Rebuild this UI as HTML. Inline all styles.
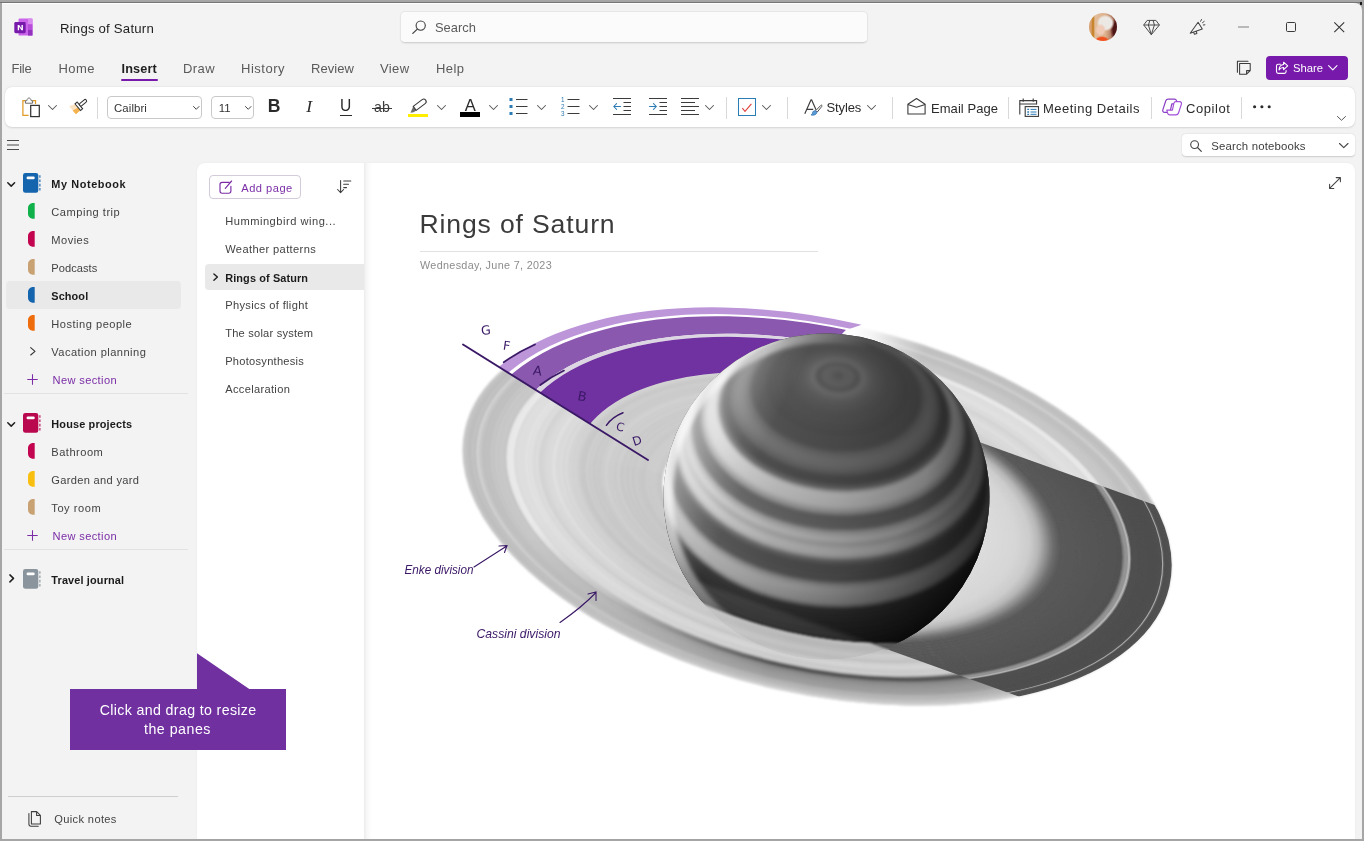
<!DOCTYPE html><html lang="en"><head><meta charset="utf-8"><title>Rings of Saturn - OneNote</title><style>

*{box-sizing:border-box;margin:0;padding:0}
html,body{width:1364px;height:841px;overflow:hidden;background:#a6a6a6;font-family:"Liberation Sans",sans-serif}
#win{position:absolute;left:2px;top:3px;width:1360px;height:836px;background:#f3f3f3;border-top-right-radius:7px;overflow:hidden}
#root{position:absolute;left:0;top:0;width:1364px;height:841px;overflow:hidden;will-change:transform}
.t{position:absolute;white-space:nowrap;line-height:24px;letter-spacing:0}
.i{position:absolute;overflow:visible}
.b{position:absolute}


#topline{left:0;top:2px;width:1362px;height:1px;background:#757575}
#tophl{left:2px;top:3px;width:1352px;height:1px;background:#fff}
#sbox{left:400px;top:11px;width:468px;height:32px;background:#fbfbfb;border:1px solid #e6e6e6;border-bottom-color:#d2d2d2;border-radius:5px;box-shadow:0 1px 1.5px rgba(0,0,0,.06)}
#tabline{left:121px;top:78.5px;width:37px;height:2.6px;background:#7719aa;border-radius:1.3px}
#share{left:1266px;top:56px;width:82px;height:23.5px;background:#7719aa;border-radius:4px}
#avatar{left:1089px;top:13px;width:28px;height:28px;border-radius:50%;overflow:hidden;
 background:
  radial-gradient(ellipse 5.5px 6.5px at 11.5px 17px,#efcbb8 0 60%,rgba(239,203,184,0) 100%),
  radial-gradient(ellipse 9px 8.5px at 16.5px 10px,#ece8e4 0 70%,rgba(236,232,228,0) 100%),
  radial-gradient(ellipse 7.5px 4.5px at 13px 27.5px,#f0521f 0 65%,rgba(240,82,31,0) 100%),
  radial-gradient(ellipse 7px 13px at 28px 17px,#4f1616 0 55%,rgba(79,22,22,0) 100%),
  linear-gradient(90deg,#d9a070 0,#d9a070 8%,#c8862f 11%,#c8862f 17%,#e3bd9a 21%,#dcb08c 60%,#8a4a3a 100%)}


#tb{left:5px;top:87px;width:1350px;height:40px;background:#fff;border-radius:7px;box-shadow:0 0.5px 2px rgba(0,0,0,.13),0 0 1px rgba(0,0,0,.08)}
.sep{position:absolute;top:96.5px;width:1px;height:22px;background:#d9d9d9}
.box{position:absolute;top:95.5px;height:23.3px;border:1px solid #c9c9c9;border-radius:4px;background:#fff}
#snb{left:1182px;top:134.4px;width:173px;height:21.6px;background:#fff;border-radius:4px;box-shadow:0 0.5px 1.5px rgba(0,0,0,.16),0 0 1px rgba(0,0,0,.08)}


.hl{position:absolute;background:#e9e9e9}
.hr{position:absolute;height:1px;background:#e2e2e2}
#pane{left:197px;top:163px;width:1158px;height:676px;background:#fff;border-top-left-radius:8px;border-top-right-radius:8px;box-shadow:0 0 2px rgba(0,0,0,.07)}
#pshadow{left:364px;top:163px;width:8px;height:676px;background:linear-gradient(90deg,rgba(0,0,0,.075),rgba(0,0,0,.03) 35%,rgba(0,0,0,0))}
#addpg{left:209px;top:175.3px;width:91.7px;height:23.3px;border:1px solid #d3cbd9;border-radius:4px;background:#fff}


#tline{left:420px;top:250.5px;width:398px;height:1px;background:#e1e1e1}
#co{left:69.8px;top:689px;width:216.4px;height:61.4px;background:#7030a0}

</style></head><body><div id="win"></div><div id="root">
<div class="b" id="topline"></div><div class="b" id="tophl"></div>
<div class="b" style="left:1359.5px;top:2px;width:2.5px;height:2.5px;background:#1a1a1a"></div>
<svg class="i" style="left:14px;top:18px" width="19" height="18" viewBox="0 0 19 18" ><defs><linearGradient id="lgA" x1="0" y1="0" x2="1" y2="1"><stop offset="0" stop-color="#c35fe0"/><stop offset="1" stop-color="#9a36c2"/></linearGradient></defs><rect x="4.5" y="0.6" width="14" height="17" rx="1.2" fill="#ca64ea"/><rect x="14" y="0.6" width="4.5" height="5.7" fill="#d98bf0"/><rect x="14" y="6.3" width="4.5" height="5.6" fill="#b84ddb"/><rect x="14" y="11.9" width="4.5" height="5.7" fill="#9332bf"/><rect x="0.3" y="4" width="11.4" height="11.2" rx="1.4" fill="#7719aa"/><path d="M3.7 12.3V6.9h1.5l2.3 3.5V6.9h1.4v5.4H7.5L5.1 8.7v3.6z" fill="#fff"/></svg>
<span class="t" style="left:60.0px;top:16.5px;font-size:13.20px;font-weight:400;color:#1f1f1f;letter-spacing:0.201px;">Rings of Saturn</span>
<div class="b" id="sbox"></div>
<svg class="i" style="left:412px;top:20px" width="14" height="14" viewBox="0 0 14 14" ><circle cx="8.7" cy="5.6" r="4.6" fill="none" stroke="#444" stroke-width="1.15"/><path d="M5.3 9.1L0.8 13.4" stroke="#444" stroke-width="1.3" stroke-linecap="round"/></svg>
<span class="t" style="left:435.0px;top:15.5px;font-size:12.90px;font-weight:400;color:#5c5c5c;letter-spacing:0.021px;">Search</span>
<div class="b" id="avatar"></div>
<svg class="i" style="left:1142.5px;top:19px" width="17" height="16" viewBox="0 0 17 16" ><path d="M4.2 1.4H12.9L16.4 6L8.3 15.7L0.7 6Z M0.7 6H16.4 M5.4 6L8.3 15.7L11.400 6 M5.400 6L6.900 1.400 M11.400 6L10.100 1.400" fill="none" stroke="#4a4a4a" stroke-width="1" stroke-linejoin="round"/></svg>
<svg class="i" style="left:1188.5px;top:19px" width="17" height="17" viewBox="0 0 17 17" ><path d="M1.2 14.2L9.1 3.2l4.2 6.9z M4.6 13.4l0.9 1.9 2.4-0.9-0.6-1.7" fill="none" stroke="#444" stroke-width="1.05" stroke-linejoin="round"/><path d="M11.6 2.3l0.9-1.8M13.5 3.7l1.7-1.3M14.3 6l1.6-0.2" stroke="#444" stroke-width="1" stroke-linecap="round"/></svg>
<div class="b" style="left:1238px;top:26.4px;width:10.5px;height:1.2px;background:#b9b9b9"></div>
<div class="b" style="left:1285.7px;top:21.8px;width:10.2px;height:10.2px;border:1.1px solid #3a3a3a;border-radius:1.6px"></div>
<svg class="i" style="left:1334px;top:22px" width="10.5" height="10.5" viewBox="0 0 10.5 10.5" ><path d="M0.3 0.3l9.9 9.9M10.2 0.3l-9.9 9.9" stroke="#333" stroke-width="1.05"/></svg>
<span class="t" style="left:11.5px;top:56.5px;font-size:13.00px;font-weight:400;color:#5a5a5a;letter-spacing:-0.237px;">File</span>
<span class="t" style="left:58.5px;top:56.5px;font-size:13.00px;font-weight:400;color:#5a5a5a;letter-spacing:0.456px;">Home</span>
<span class="t" style="left:121.5px;top:57.0px;font-size:12.70px;font-weight:700;color:#1f1f1f;letter-spacing:0.153px;">Insert</span>
<span class="t" style="left:183.0px;top:56.5px;font-size:13.00px;font-weight:400;color:#5a5a5a;letter-spacing:0.416px;">Draw</span>
<span class="t" style="left:241.0px;top:56.5px;font-size:13.00px;font-weight:400;color:#5a5a5a;letter-spacing:0.508px;">History</span>
<span class="t" style="left:311.0px;top:56.5px;font-size:13.00px;font-weight:400;color:#5a5a5a;letter-spacing:0.063px;">Review</span>
<span class="t" style="left:380.0px;top:56.5px;font-size:13.00px;font-weight:400;color:#5a5a5a;letter-spacing:0.389px;">View</span>
<span class="t" style="left:436.0px;top:56.5px;font-size:13.00px;font-weight:400;color:#5a5a5a;letter-spacing:0.441px;">Help</span>
<div class="b" id="tabline"></div>
<svg class="i" style="left:1236px;top:59.5px" width="16" height="16" viewBox="0 0 16 16" ><path d="M3.6 3.4h10.6v7.2l-3.6 3.6H3.6z M14.2 10.6h-3.6v3.6" fill="none" stroke="#3a3a3a" stroke-width="1.05" stroke-linejoin="round"/><path d="M1.4 1.4v10.8 M1.4 1.2h10.6" fill="none" stroke="#3a3a3a" stroke-width="1.05" stroke-linecap="round"/></svg>
<div class="b" id="share"></div>
<svg class="i" style="left:1275px;top:61px" width="14" height="14" viewBox="0 0 14 14" ><path d="M5.4 3.2H3.3a1.8 1.8 0 0 0-1.8 1.8v5.6a1.8 1.8 0 0 0 1.8 1.8h6a1.8 1.8 0 0 0 1.8-1.8v-1" fill="none" stroke="#fff" stroke-width="1.1" stroke-linecap="round"/><path d="M8.6 1.2l4.1 3.7-4.1 3.7V6.5C6.3 6.4 5 7.2 4 8.9 4.2 5.6 5.8 3.7 8.6 3.5z" fill="none" stroke="#fff" stroke-width="1.1" stroke-linejoin="round"/></svg>
<span class="t" style="left:1293.0px;top:56.0px;font-size:11.24px;font-weight:400;color:#fff;">Share</span>
<svg class="i" style="left:1327.5px;top:65px" width="10" height="6" viewBox="0 0 10 6" ><path d="M0.6 0.7l4.2 4.2 4.2-4.2" fill="none" stroke="#fff" stroke-width="1.1" stroke-linecap="round" stroke-linejoin="round"/></svg>
<div class="b" id="tb"></div>
<svg class="i" style="left:22px;top:97.9px" width="18" height="19" viewBox="0 0 18 19" ><path d="M3.600 2.700H0.900V17.300H6.600 M10.400 2.700h3.100v3.300" fill="none" stroke="#e09a26" stroke-width="1.250"/><path d="M3.400 5.200V2.700h1.400c0.300-1.700 1.200-2.700 2.200-2.700s1.900 1 2.200 2.700h1.400v2.500z" fill="#fff" stroke="#6a6a6a" stroke-width="1"/><rect x="8.700" y="7.400" width="8.600" height="11.200" fill="#fff" stroke="#333" stroke-width="1.250"/></svg>
<svg class="i" style="left:47.9px;top:105.2px" width="9" height="5" viewBox="0 0 9 5" ><path d="M0.5 0.5L4.5 4.5L8.5 0.5" fill="none" stroke="#555" stroke-width="1.05" stroke-linecap="round" stroke-linejoin="round"/></svg>
<svg class="i" style="left:69px;top:99px" width="18" height="16" viewBox="0 0 18 16" ><g transform="translate(9.800 7.300) rotate(-40)"><path d="M-1.200 -4L-7.400 -6.200L-7.300 4.200L-1.200 4z" fill="#fbe3c2"/><path d="M-1.200 0.600L-7.350 -0.800L-7.300 4.200L-1.200 4z" fill="#f4b350"/><rect x="-1.300" y="-4.300" width="2.700" height="8.600" fill="#fff" stroke="#333" stroke-width="1.050"/><rect x="1.400" y="-1.500" width="8.300" height="3" rx="1.400" fill="#fff" stroke="#333" stroke-width="1.050"/></g></svg>
<div class="sep" style="left:97.2px"></div>
<div class="box" style="left:106.5px;width:95.7px"></div>
<span class="t" style="left:114.0px;top:96.0px;font-size:11.40px;font-weight:400;color:#333;letter-spacing:0.099px;">Cailbri</span>
<svg class="i" style="left:193px;top:105.6px" width="6.5" height="3.8" viewBox="0 0 6.5 3.8" ><path d="M0.5 0.5L3.25 3.3L6.0 0.5" fill="none" stroke="#444" stroke-width="1" stroke-linecap="round" stroke-linejoin="round"/></svg>
<div class="box" style="left:210.7px;width:43.5px"></div>
<span class="t" style="left:218.8px;top:96.0px;font-size:11.40px;font-weight:400;color:#333;letter-spacing:0.083px;">11</span>
<svg class="i" style="left:244.5px;top:105.6px" width="6.5" height="3.8" viewBox="0 0 6.5 3.8" ><path d="M0.5 0.5L3.25 3.3L6.0 0.5" fill="none" stroke="#444" stroke-width="1" stroke-linecap="round" stroke-linejoin="round"/></svg>
<span class="t" style="left:267.8px;top:94.0px;font-size:17.60px;font-weight:700;color:#2b2b2b;">B</span>
<span class="t" style="left:306.3px;top:94.0px;font-size:17.50px;font-weight:400;color:#2b2b2b;font-family:&quot;Liberation Serif&quot;,serif;font-style:italic;">I</span>
<span class="t" style="left:340.0px;top:93.5px;font-size:15.60px;font-weight:400;color:#2b2b2b;">U</span>
<div class="b" style="left:340px;top:114.9px;width:12px;height:1.1px;background:#2b2b2b"></div>
<span class="t" style="left:374.0px;top:95.0px;font-size:14.20px;font-weight:400;color:#3b3b3b;">ab</span>
<div class="b" style="left:372px;top:107.7px;width:19.8px;height:1.1px;background:#3b3b3b"></div>
<svg class="i" style="left:408px;top:97px" width="22" height="18" viewBox="0 0 22 18" ><g transform="translate(6.700 11.400) rotate(-37)"><path d="M0 -2.500L-6 0.900L-3.200 2.500L0 2.500z" fill="#6e6e6e"/><path d="M0 -2.500H11.200a2.500 2.500 0 0 1 0 5H0z" fill="#fff" stroke="#3a3a3a" stroke-width="1.100" stroke-linejoin="round"/></g></svg>
<div class="b" style="left:408px;top:114px;width:20px;height:3.4px;background:#ffee00"></div>
<svg class="i" style="left:437px;top:105.2px" width="9" height="5" viewBox="0 0 9 5" ><path d="M0.5 0.5L4.5 4.5L8.5 0.5" fill="none" stroke="#555" stroke-width="1.05" stroke-linecap="round" stroke-linejoin="round"/></svg>
<span class="t" style="left:464.7px;top:93.5px;font-size:16.60px;font-weight:400;color:#2b2b2b;">A</span>
<div class="b" style="left:460px;top:112px;width:20px;height:5px;background:#000"></div>
<svg class="i" style="left:488.8px;top:105.2px" width="9" height="5" viewBox="0 0 9 5" ><path d="M0.5 0.5L4.5 4.5L8.5 0.5" fill="none" stroke="#555" stroke-width="1.05" stroke-linecap="round" stroke-linejoin="round"/></svg>
<svg class="i" style="left:508.5px;top:98px" width="19" height="17" viewBox="0 0 19 17" ><rect x="0.5" y="0.0" width="3" height="3" fill="#2b7bb5"/><path d="M7 1.5H18.5" stroke="#3b3b3b" stroke-width="1"/><rect x="0.5" y="7.0" width="3" height="3" fill="#2b7bb5"/><path d="M7 8.5H18.5" stroke="#3b3b3b" stroke-width="1"/><rect x="0.5" y="14.0" width="3" height="3" fill="#2b7bb5"/><path d="M7 15.5H18.5" stroke="#3b3b3b" stroke-width="1"/></svg>
<svg class="i" style="left:537px;top:105.2px" width="9" height="5" viewBox="0 0 9 5" ><path d="M0.5 0.5L4.5 4.5L8.5 0.5" fill="none" stroke="#555" stroke-width="1.05" stroke-linecap="round" stroke-linejoin="round"/></svg>
<svg class="i" style="left:560.5px;top:98px" width="19" height="17" viewBox="0 0 19 17" ><text x="0" y="3.7" font-family="Liberation Sans, sans-serif" font-size="6.3" fill="#2b7bb5">1</text><path d="M6.5 1.5H18.5" stroke="#3b3b3b" stroke-width="1"/><text x="0" y="10.7" font-family="Liberation Sans, sans-serif" font-size="6.3" fill="#2b7bb5">2</text><path d="M6.5 8.5H18.5" stroke="#3b3b3b" stroke-width="1"/><text x="0" y="17.7" font-family="Liberation Sans, sans-serif" font-size="6.3" fill="#2b7bb5">3</text><path d="M6.5 15.5H18.5" stroke="#3b3b3b" stroke-width="1"/></svg>
<svg class="i" style="left:589.3px;top:105.2px" width="9" height="5" viewBox="0 0 9 5" ><path d="M0.5 0.5L4.5 4.5L8.5 0.5" fill="none" stroke="#555" stroke-width="1.05" stroke-linecap="round" stroke-linejoin="round"/></svg>
<svg class="i" style="left:613px;top:98px" width="18" height="17" viewBox="0 0 18 17" ><path d="M0 0.5H18" stroke="#3b3b3b" stroke-width="1"/><path d="M10.5 4.5H18" stroke="#3b3b3b" stroke-width="1"/><path d="M10.5 8.5H18" stroke="#3b3b3b" stroke-width="1"/><path d="M10.5 12.5H18" stroke="#3b3b3b" stroke-width="1"/><path d="M0 16.5H18" stroke="#3b3b3b" stroke-width="1"/><path d="M7.6 8.5H0.8M3.6 5.6l-2.900 2.900 2.900 2.900" fill="none" stroke="#2b7bb5" stroke-width="1.05" stroke-linecap="round" stroke-linejoin="round"/></svg>
<svg class="i" style="left:649px;top:98px" width="18" height="17" viewBox="0 0 18 17" ><path d="M0 0.5H18" stroke="#3b3b3b" stroke-width="1"/><path d="M10.5 4.5H18" stroke="#3b3b3b" stroke-width="1"/><path d="M10.5 8.5H18" stroke="#3b3b3b" stroke-width="1"/><path d="M10.5 12.5H18" stroke="#3b3b3b" stroke-width="1"/><path d="M0 16.5H18" stroke="#3b3b3b" stroke-width="1"/><path d="M0.5 8.5H7.3M4.500 5.600l2.900 2.900-2.900 2.900" fill="none" stroke="#2b7bb5" stroke-width="1.05" stroke-linecap="round" stroke-linejoin="round"/></svg>
<svg class="i" style="left:681px;top:98px" width="18" height="17" viewBox="0 0 18 17" ><path d="M0 0.5H18" stroke="#3b3b3b" stroke-width="1"/><path d="M0 4.5H14" stroke="#3b3b3b" stroke-width="1"/><path d="M0 8.5H18" stroke="#3b3b3b" stroke-width="1"/><path d="M0 12.5H14" stroke="#3b3b3b" stroke-width="1"/><path d="M0 16.5H18" stroke="#3b3b3b" stroke-width="1"/></svg>
<svg class="i" style="left:705px;top:105.2px" width="9" height="5" viewBox="0 0 9 5" ><path d="M0.5 0.5L4.5 4.5L8.5 0.5" fill="none" stroke="#555" stroke-width="1.05" stroke-linecap="round" stroke-linejoin="round"/></svg>
<div class="sep" style="left:726.3px"></div>
<div class="b" style="left:737.8px;top:98px;width:18px;height:18.2px;border:1.2px solid #2b7bb5;background:#fff"></div>
<svg class="i" style="left:741px;top:101.5px" width="12" height="11" viewBox="0 0 12 11" ><path d="M1.300 6.200l2.700 3.100 6.400-7.500" fill="none" stroke="#e0443e" stroke-width="1.150"/></svg>
<svg class="i" style="left:762px;top:105.2px" width="9" height="5" viewBox="0 0 9 5" ><path d="M0.5 0.5L4.5 4.5L8.5 0.5" fill="none" stroke="#555" stroke-width="1.05" stroke-linecap="round" stroke-linejoin="round"/></svg>
<div class="sep" style="left:787.1px"></div>
<svg class="i" style="left:804.4px;top:98.5px" width="18" height="18" viewBox="0 0 18 18" ><path d="M0.800 14.800L6.900 0.900h0.800l4.300 9.800 M2.800 10.300h6.400" fill="none" stroke="#3b3b3b" stroke-width="1.150" stroke-linejoin="round"/><path d="M16.900 6.300l-5.100 5.200 1.500 1.500 4.600-5.700c.500-.800-.400-1.600-1-1z" fill="#fff" stroke="#3b3b3b" stroke-width=".9"/><path d="M11.500 11.700c-1.700-.300-2.800.700-3 2.100-.100 1-.500 1.600-1.500 2.100 2.700.900 5.700-.300 6-2.700z" fill="#5b9bd5" stroke="#2f6fb0" stroke-width=".7"/></svg>
<span class="t" style="left:826.6px;top:95.5px;font-size:13.00px;font-weight:400;color:#2b2b2b;letter-spacing:-0.150px;">Styles</span>
<svg class="i" style="left:867px;top:105.2px" width="9" height="5" viewBox="0 0 9 5" ><path d="M0.5 0.5L4.5 4.5L8.5 0.5" fill="none" stroke="#555" stroke-width="1.05" stroke-linecap="round" stroke-linejoin="round"/></svg>
<div class="sep" style="left:892.3px"></div>
<svg class="i" style="left:907.2px;top:98.2px" width="19" height="17.5" viewBox="0 0 19 17.5" ><path d="M0.900 6.300L9.500 0.500l8.600 5.800v9.700H0.900z" fill="#fff" stroke="#3b3b3b" stroke-width="1.100" stroke-linejoin="round"/><path d="M0.900 6.500l8.600 2.800 8.600-2.800" fill="none" stroke="#3b3b3b" stroke-width="1.100" stroke-linejoin="round"/></svg>
<span class="t" style="left:931.0px;top:96.5px;font-size:13.00px;font-weight:400;color:#2b2b2b;letter-spacing:0.052px;">Email Page</span>
<div class="sep" style="left:1008px"></div>
<svg class="i" style="left:1019.3px;top:98px" width="20.5" height="19.5" viewBox="0 0 20.5 19.5" ><path d="M0.800 16.600V2.600h16.800v3.800" fill="none" stroke="#3b3b3b" stroke-width="1.100"/><path d="M0.800 6H17.600" stroke="#3b3b3b" stroke-width="1"/><path d="M4.200 0.600v3.200M14.200 0.600v3.200" stroke="#3b3b3b" stroke-width="1.100"/><rect x="6.200" y="8.600" width="13.300" height="9.800" fill="#fff" stroke="#3b3b3b" stroke-width="1.100"/><path d="M8.300 11.400h1.800M8.300 14h1.800M8.300 16.300h1.800" stroke="#2b7bb5" stroke-width="1.300"/><path d="M11.500 11.400h6M11.500 14h6M11.500 16.300h6" stroke="#2b7bb5" stroke-width="1"/></svg>
<span class="t" style="left:1043.0px;top:96.5px;font-size:13.00px;font-weight:400;color:#2b2b2b;letter-spacing:0.493px;">Meeting Details</span>
<div class="sep" style="left:1151px"></div>
<svg class="i" style="left:1161.5px;top:98.2px" width="20.5" height="18" viewBox="0 0 20.5 18" ><path d="M7.200 1.200h5.300c1 0 1.700.500 2 1.500l.900 3.100h-5.600L8.300 12.900c-.300 1-1 1.500-2 1.500H2.600c-1.400 0-2.200-1.200-1.800-2.500L3.700 3c.400-1.200 1.300-1.800 2.500-1.800z" fill="#fff" stroke="#8a3fc4" stroke-width="1.200" stroke-linejoin="round"/><path d="M13 16.800H7.700c-1 0-1.700-.500-2-1.500l-.900-3.100h5.600l1.500-7.100c.300-1 1-1.500 2-1.500h3.700c1.400 0 2.200 1.200 1.800 2.500L16.500 15c-.400 1.200-1.300 1.800-2.500 1.800z" fill="#fff" stroke="#a34fd8" stroke-width="1.200" stroke-linejoin="round"/></svg>
<span class="t" style="left:1186.0px;top:96.5px;font-size:13.00px;font-weight:400;color:#2b2b2b;letter-spacing:0.576px;">Copilot</span>
<div class="sep" style="left:1241px"></div>
<svg class="i" style="left:1253px;top:105px" width="19" height="4" viewBox="0 0 19 4" ><circle cx="1.600" cy="1.700" r="1.550" fill="#2b2b2b"/><circle cx="8.900" cy="1.700" r="1.550" fill="#2b2b2b"/><circle cx="16.200" cy="1.700" r="1.550" fill="#2b2b2b"/></svg>
<svg class="i" style="left:1336.5px;top:115.5px" width="9" height="4.8" viewBox="0 0 9 4.8" ><path d="M0.5 0.5L4.5 4.3L8.5 0.5" fill="none" stroke="#555" stroke-width="1" stroke-linecap="round" stroke-linejoin="round"/></svg>
<svg class="i" style="left:7px;top:140px" width="12" height="11" viewBox="0 0 12 11" ><path d="M0 0.500H12M0 5H12M0 9.500H12" stroke="#4a4a4a" stroke-width="1.050"/></svg>
<div class="b" id="snb"></div>
<svg class="i" style="left:1189.5px;top:139.5px" width="12" height="12" viewBox="0 0 12 12" ><circle cx="4.600" cy="4.600" r="3.900" fill="none" stroke="#444" stroke-width="1.100"/><path d="M7.500 7.500L11.300 11.300" stroke="#444" stroke-width="1.200" stroke-linecap="round"/></svg>
<span class="t" style="left:1211.3px;top:134.0px;font-size:11.40px;font-weight:400;color:#3d3d3d;letter-spacing:0.163px;">Search notebooks</span>
<svg class="i" style="left:1339px;top:142.6px" width="9.5" height="5.2" viewBox="0 0 9.5 5.2" ><path d="M0.5 0.5L4.75 4.7L9.0 0.5" fill="none" stroke="#444" stroke-width="1.1" stroke-linecap="round" stroke-linejoin="round"/></svg>
<div class="hl" style="left:5.8px;top:281px;width:175px;height:28px;border-radius:4px"></div>
<svg class="i" style="left:23px;top:173.0px" width="18" height="20" viewBox="0 0 18 20" ><rect x="0" y="0" width="15.3" height="19.8" rx="2.3" fill="#1464ae"/><rect x="3.6" y="3.500" width="8.100" height="2.700" rx="1.200" fill="#fff"/><path d="M16.900 2.200V17.600" stroke="#1464ae" stroke-width="1.100" stroke-dasharray="2.6 1.7"/></svg>
<span class="t" style="left:51.3px;top:172.0px;font-size:10.90px;font-weight:700;color:#1b1b1b;letter-spacing:0.597px;">My Notebook</span>
<svg class="i" style="left:7px;top:181.5px" width="8.4" height="5" viewBox="0 0 8.4 5" ><path d="M0.800 0.800L4.200 4.100L7.600 0.800" fill="none" stroke="#1f1f1f" stroke-width="1.500" stroke-linecap="round" stroke-linejoin="round"/></svg>
<svg class="i" style="left:27.5px;top:202.8px" width="7" height="16" viewBox="0 0 7 16" ><path d="M6.700 0V15.800H5.200C2.200 15.800 0 13.600 0 10.800V5C0 2.200 2.200 0 5.200 0z" fill="#10b14b"/></svg>
<span class="t" style="left:51.3px;top:200.0px;font-size:11.10px;font-weight:400;color:#424242;letter-spacing:0.506px;">Camping trip</span>
<svg class="i" style="left:27.5px;top:230.8px" width="7" height="16" viewBox="0 0 7 16" ><path d="M6.700 0V15.800H5.200C2.200 15.800 0 13.600 0 10.800V5C0 2.200 2.200 0 5.200 0z" fill="#c3044f"/></svg>
<span class="t" style="left:51.3px;top:228.0px;font-size:11.10px;font-weight:400;color:#424242;letter-spacing:0.473px;">Movies</span>
<svg class="i" style="left:27.5px;top:258.8px" width="7" height="16" viewBox="0 0 7 16" ><path d="M6.700 0V15.800H5.200C2.200 15.800 0 13.600 0 10.800V5C0 2.200 2.200 0 5.200 0z" fill="#c9a273"/></svg>
<span class="t" style="left:51.3px;top:256.0px;font-size:11.10px;font-weight:400;color:#424242;letter-spacing:0.043px;">Podcasts</span>
<svg class="i" style="left:27.5px;top:286.8px" width="7" height="16" viewBox="0 0 7 16" ><path d="M6.700 0V15.800H5.200C2.200 15.800 0 13.600 0 10.800V5C0 2.200 2.200 0 5.200 0z" fill="#1464ae"/></svg>
<span class="t" style="left:51.3px;top:284.0px;font-size:10.90px;font-weight:700;color:#1b1b1b;letter-spacing:0.111px;">School</span>
<svg class="i" style="left:27.5px;top:314.8px" width="7" height="16" viewBox="0 0 7 16" ><path d="M6.700 0V15.800H5.200C2.200 15.800 0 13.600 0 10.800V5C0 2.200 2.200 0 5.200 0z" fill="#ef6c0c"/></svg>
<span class="t" style="left:51.3px;top:312.0px;font-size:11.10px;font-weight:400;color:#424242;letter-spacing:0.496px;">Hosting people</span>
<svg class="i" style="left:30.2px;top:347.4px" width="6" height="8.6" viewBox="0 0 6 8.6" ><path d="M0.700 0.600L5 4.300L0.700 8" fill="none" stroke="#333" stroke-width="1.100" stroke-linecap="round" stroke-linejoin="round"/></svg>
<span class="t" style="left:51.3px;top:340.0px;font-size:11.10px;font-weight:400;color:#424242;letter-spacing:0.445px;">Vacation planning</span>
<svg class="i" style="left:27px;top:373.8px" width="11" height="11" viewBox="0 0 11 11" ><path d="M5.500 0.300V10.700M0.300 5.500H10.700" stroke="#7a2da6" stroke-width="1.050"/></svg>
<span class="t" style="left:52.5px;top:368.0px;font-size:11.10px;font-weight:400;color:#7a2da6;letter-spacing:0.367px;">New section</span>
<svg class="i" style="left:23px;top:413.1px" width="18" height="20" viewBox="0 0 18 20" ><rect x="0" y="0" width="15.3" height="19.8" rx="2.3" fill="#b9084e"/><rect x="3.6" y="3.500" width="8.100" height="2.700" rx="1.200" fill="#fff"/><path d="M16.900 2.200V17.600" stroke="#b9084e" stroke-width="1.100" stroke-dasharray="2.6 1.7"/></svg>
<span class="t" style="left:51.3px;top:412.0px;font-size:10.90px;font-weight:700;color:#1b1b1b;letter-spacing:0.161px;">House projects</span>
<svg class="i" style="left:7px;top:421.6px" width="8.4" height="5" viewBox="0 0 8.4 5" ><path d="M0.800 0.800L4.200 4.100L7.600 0.800" fill="none" stroke="#1f1f1f" stroke-width="1.500" stroke-linecap="round" stroke-linejoin="round"/></svg>
<svg class="i" style="left:27.5px;top:442.90000000000003px" width="7" height="16" viewBox="0 0 7 16" ><path d="M6.700 0V15.800H5.200C2.200 15.800 0 13.600 0 10.800V5C0 2.200 2.200 0 5.200 0z" fill="#c3044f"/></svg>
<span class="t" style="left:51.3px;top:440.0px;font-size:11.10px;font-weight:400;color:#424242;letter-spacing:0.485px;">Bathroom</span>
<svg class="i" style="left:27.5px;top:470.90000000000003px" width="7" height="16" viewBox="0 0 7 16" ><path d="M6.700 0V15.800H5.200C2.200 15.800 0 13.600 0 10.800V5C0 2.200 2.200 0 5.200 0z" fill="#f9bf10"/></svg>
<span class="t" style="left:51.3px;top:468.0px;font-size:11.10px;font-weight:400;color:#424242;letter-spacing:0.313px;">Garden and yard</span>
<svg class="i" style="left:27.5px;top:498.90000000000003px" width="7" height="16" viewBox="0 0 7 16" ><path d="M6.700 0V15.800H5.200C2.200 15.800 0 13.600 0 10.800V5C0 2.200 2.200 0 5.200 0z" fill="#c9a273"/></svg>
<span class="t" style="left:51.3px;top:496.0px;font-size:11.10px;font-weight:400;color:#424242;letter-spacing:0.544px;">Toy room</span>
<svg class="i" style="left:27px;top:529.9px" width="11" height="11" viewBox="0 0 11 11" ><path d="M5.500 0.300V10.700M0.300 5.500H10.700" stroke="#7a2da6" stroke-width="1.050"/></svg>
<span class="t" style="left:52.5px;top:524.0px;font-size:11.10px;font-weight:400;color:#7a2da6;letter-spacing:0.367px;">New section</span>
<svg class="i" style="left:23px;top:569.1px" width="18" height="20" viewBox="0 0 18 20" ><rect x="0" y="0" width="15.3" height="19.8" rx="2.3" fill="#8a949c"/><rect x="3.6" y="3.500" width="8.100" height="2.700" rx="1.200" fill="#fff"/><path d="M16.900 2.200V17.600" stroke="#8a949c" stroke-width="1.100" stroke-dasharray="2.6 1.7"/></svg>
<span class="t" style="left:51.3px;top:568.0px;font-size:10.90px;font-weight:700;color:#1b1b1b;letter-spacing:0.152px;">Travel journal</span>
<svg class="i" style="left:8.6px;top:574.4px" width="5.5" height="8.8" viewBox="0 0 5.5 8.8" ><path d="M0.900 0.900L4.500 4.400L0.900 7.900" fill="none" stroke="#1f1f1f" stroke-width="1.500" stroke-linecap="round" stroke-linejoin="round"/></svg>
<div class="hr" style="left:4px;top:393.2px;width:184px"></div>
<div class="hr" style="left:4px;top:548.8px;width:184px"></div>
<div class="hr" style="left:8px;top:796px;width:170px;background:#cfcfcf"></div>
<svg class="i" style="left:28px;top:811.2px" width="13" height="16" viewBox="0 0 13 16" ><path d="M3.400 0.600h5.200l3.800 3.800v8.500H3.400z M8.600 0.600v3.800h3.800" fill="none" stroke="#3d3d3d" stroke-width="1.050" stroke-linejoin="round"/><path d="M0.900 2.500v10.600c0 1.300.800 2.100 2.100 2.100h7.300" fill="none" stroke="#3d3d3d" stroke-width="1.050" stroke-linecap="round"/></svg>
<span class="t" style="left:54.3px;top:807.0px;font-size:11.10px;font-weight:400;color:#424242;letter-spacing:0.354px;">Quick notes</span>
<div class="b" id="pane"></div><div class="b" id="pshadow"></div>
<div class="b" id="addpg"></div>
<svg class="i" style="left:218.8px;top:180px" width="14" height="14" viewBox="0 0 14 14" ><path d="M10.300 2.300H3.100C1.900 2.300 1 3.200 1 4.400v6.700c0 1.200.900 2.100 2.100 2.100h6.700c1.200 0 2.100-.900 2.100-2.100V6.200" fill="none" stroke="#7a2da6" stroke-width="1.150" stroke-linecap="round"/><path d="M6.300 8.300L12.600 1" stroke="#7a2da6" stroke-width="1.150" stroke-linecap="round"/></svg>
<span class="t" style="left:241.3px;top:176.0px;font-size:11.10px;font-weight:400;color:#7a2da6;letter-spacing:0.497px;">Add page</span>
<svg class="i" style="left:337px;top:180.3px" width="14.5" height="13.5" viewBox="0 0 14.5 13.5" ><path d="M3.600 0.600V12.600M0.600 9.500l3 3.200 3-3.200" fill="none" stroke="#3d3d3d" stroke-width="1.050" stroke-linecap="round" stroke-linejoin="round"/><path d="M6.700 1H13.800M6.700 4.300H11.500M6.700 7.600H9.500" stroke="#3d3d3d" stroke-width="1.050" stroke-linecap="round"/></svg>
<div class="hl" style="left:205.2px;top:264.2px;width:158.8px;height:26.300px;border-radius:4px 0 0 4px"></div>
<span class="t" style="left:225.2px;top:209.0px;font-size:11.10px;font-weight:400;color:#424242;letter-spacing:0.517px;">Hummingbird wing...</span>
<span class="t" style="left:225.2px;top:237.0px;font-size:11.10px;font-weight:400;color:#424242;letter-spacing:0.379px;">Weather patterns</span>
<span class="t" style="left:225.2px;top:266.0px;font-size:10.90px;font-weight:700;color:#1b1b1b;letter-spacing:0.124px;">Rings of Saturn</span>
<span class="t" style="left:225.2px;top:293.0px;font-size:11.10px;font-weight:400;color:#424242;letter-spacing:0.346px;">Physics of flight</span>
<span class="t" style="left:225.2px;top:321.0px;font-size:11.10px;font-weight:400;color:#424242;letter-spacing:0.218px;">The solar system</span>
<span class="t" style="left:225.2px;top:349.0px;font-size:11.10px;font-weight:400;color:#424242;letter-spacing:0.266px;">Photosynthesis</span>
<span class="t" style="left:225.2px;top:377.0px;font-size:11.10px;font-weight:400;color:#424242;letter-spacing:0.326px;">Accelaration</span>
<svg class="i" style="left:212.8px;top:273px" width="5.5" height="8.2" viewBox="0 0 5.5 8.2" ><path d="M0.900 0.900L4.400 4.100L0.900 7.300" fill="none" stroke="#1f1f1f" stroke-width="1.400" stroke-linecap="round" stroke-linejoin="round"/></svg>
<span class="t" style="left:419.5px;top:212.0px;font-size:26.60px;font-weight:400;color:#3b3b3b;letter-spacing:0.844px;">Rings of Saturn</span>
<div class="b" id="tline"></div>
<span class="t" style="left:420.0px;top:253.0px;font-size:10.80px;font-weight:400;color:#8c8c8c;letter-spacing:0.327px;">Wednesday, June 7, 2023</span>
<svg class="i" style="left:1329px;top:177px" width="12" height="12" viewBox="0 0 12 12" ><path d="M7.200 0.600H11.400V4.800M11.400 0.600L0.600 11.400M0.600 7.200V11.400H4.800" fill="none" stroke="#444" stroke-width="1.050" stroke-linecap="round" stroke-linejoin="round"/></svg>
<svg class="i" style="left:0;top:0" width="1364" height="841" viewBox="0 0 1364 841">
<defs>
<filter id="sb1" x="-5%" y="-5%" width="110%" height="110%"><feGaussianBlur stdDeviation="1.3"/></filter>
<filter id="sb2" x="-5%" y="-5%" width="110%" height="110%"><feGaussianBlur stdDeviation="2.2"/></filter>
<filter id="sb3" x="-5%" y="-5%" width="110%" height="110%"><feGaussianBlur stdDeviation="0.6"/></filter>
<clipPath id="cpPlanet"><ellipse cx="826.5" cy="496.4" rx="163.0" ry="163.0" transform="rotate(5.5 826.5 496.4)"/></clipPath>
<clipPath id="cpPlanetBig"><circle cx="826.5" cy="496.4" r="165.5"/></clipPath>
<clipPath id="cpFront"><polygon points="133.9,355.3 1500.1,660.7 1347.4,1343.8 -18.8,1038.4"/></clipPath>
<clipPath id="cpStrip"><polygon points="811.0,381.6 1300.0,557.1 1300.0,797.6 811.0,622.0"/></clipPath>
<clipPath id="cpBelowStrip"><polygon points="600,546.3 1017,696 1300,797.6 1300,900 600,900"/></clipPath>
<clipPath id="cpNotPlanet"><path clip-rule="evenodd" d="M0 0H1364V841H0Z M987.8 511.9L985.8 525.9L982.6 539.7L978.2 553.1L972.7 566.1L966.1 578.6L958.4 590.5L949.7 601.6L940.0 611.9L929.5 621.4L918.3 629.9L906.3 637.4L893.7 643.8L880.6 649.1L867.1 653.2L853.2 656.2L839.2 657.9L825.1 658.4L811.0 657.7L797.0 655.7L783.2 652.5L769.8 648.1L756.8 642.6L744.3 636.0L732.4 628.3L721.3 619.6L711.0 609.9L701.5 599.4L693.0 588.2L685.5 576.2L679.1 563.6L673.8 550.5L669.7 537.0L666.7 523.1L665.0 509.1L664.5 495.0L665.2 480.9L667.2 466.9L670.4 453.1L674.8 439.7L680.3 426.7L686.9 414.2L694.6 402.3L703.3 391.2L713.0 380.9L723.5 371.4L734.7 362.9L746.7 355.4L759.3 349.0L772.4 343.7L785.9 339.6L799.8 336.6L813.8 334.9L827.9 334.4L842.0 335.1L856.0 337.1L869.8 340.3L883.2 344.7L896.2 350.2L908.7 356.8L920.6 364.5L931.7 373.2L942.0 382.9L951.5 393.4L960.0 404.6L967.5 416.6L973.9 429.2L979.2 442.3L983.3 455.8L986.3 469.7L988.0 483.7L988.5 497.8Z"/></clipPath>
<clipPath id="cpPurple"><polygon points="463,344.5 648,460 700,492.5 760,420 845.5,330.2 861,325 900,290 440,290"/></clipPath>
<linearGradient id="gLight" gradientUnits="userSpaceOnUse" x1="662" y1="478" x2="990" y2="515"><stop offset="0" stop-color="#000" stop-opacity=".04"/><stop offset=".15" stop-color="#000" stop-opacity=".08"/><stop offset=".35" stop-color="#000" stop-opacity=".22"/><stop offset=".55" stop-color="#000" stop-opacity=".31"/><stop offset=".8" stop-color="#000" stop-opacity=".46"/><stop offset="1" stop-color="#000" stop-opacity=".62"/></linearGradient>
<radialGradient id="gLimb" gradientUnits="userSpaceOnUse" cx="790" cy="446" r="240" ><stop offset="0" stop-color="#000" stop-opacity="0"/><stop offset=".58" stop-color="#000" stop-opacity="0"/><stop offset=".82" stop-color="#000" stop-opacity=".30"/><stop offset="1" stop-color="#000" stop-opacity=".6"/></radialGradient>
<linearGradient id="gLeft" gradientUnits="userSpaceOnUse" x1="664" y1="455" x2="742" y2="492"><stop offset="0" stop-color="#fff" stop-opacity=".5"/><stop offset=".35" stop-color="#fff" stop-opacity=".3"/><stop offset=".75" stop-color="#fff" stop-opacity=".08"/><stop offset="1" stop-color="#fff" stop-opacity="0"/></linearGradient>
<radialGradient id="gRim" gradientUnits="userSpaceOnUse" cx="672" cy="455" r="215"><stop offset="0" stop-color="#fff" stop-opacity=".72"/><stop offset=".45" stop-color="#fff" stop-opacity=".6"/><stop offset=".8" stop-color="#fff" stop-opacity=".28"/><stop offset="1" stop-color="#fff" stop-opacity="0"/></radialGradient>
<linearGradient id="gTipFade" gradientUnits="userSpaceOnUse" x1="856" y1="322" x2="925" y2="348"><stop offset="0" stop-color="#fff" stop-opacity="1"/><stop offset=".25" stop-color="#fff" stop-opacity=".85"/><stop offset=".65" stop-color="#fff" stop-opacity=".35"/><stop offset="1" stop-color="#fff" stop-opacity="0"/></linearGradient>
<linearGradient id="gFrontMask" gradientUnits="userSpaceOnUse" x1="560" y1="500" x2="770" y2="665"><stop offset="0" stop-color="#fff" stop-opacity="0"/><stop offset=".35" stop-color="#fff" stop-opacity=".25"/><stop offset="1" stop-color="#fff" stop-opacity="1"/></linearGradient>
<mask id="mFront" maskUnits="userSpaceOnUse" x="380" y="280" width="900" height="480"><rect x="380" y="280" width="900" height="480" fill="url(#gFrontMask)"/></mask>
<linearGradient id="gRingShade" gradientUnits="userSpaceOnUse" x1="700" y1="380" x2="860" y2="720"><stop offset="0" stop-color="#000" stop-opacity="0"/><stop offset=".45" stop-color="#000" stop-opacity="0"/><stop offset=".8" stop-color="#000" stop-opacity=".16"/><stop offset="1" stop-color="#000" stop-opacity=".42"/></linearGradient>
</defs>
<g filter="url(#sb1)"><g transform="translate(817.0 508.0) rotate(12.6) scale(361.0 186.0)" fill="none"><circle r="0.9960" stroke="#cbcbcb" stroke-width="0.0080"/><circle r="0.9920" stroke="#c6c6c6" stroke-width="0.0080"/><circle r="0.9880" stroke="#c1c1c1" stroke-width="0.0080"/><circle r="0.9840" stroke="#c2c2c2" stroke-width="0.0080"/><circle r="0.9800" stroke="#bcbcbc" stroke-width="0.0080"/><circle r="0.9760" stroke="#bfbfbf" stroke-width="0.0080"/><circle r="0.9720" stroke="#bfbfbf" stroke-width="0.0080"/><circle r="0.9680" stroke="#c6c6c6" stroke-width="0.0080"/><circle r="0.9640" stroke="#bdbdbd" stroke-width="0.0080"/><circle r="0.9600" stroke="#c0c0c0" stroke-width="0.0080"/><circle r="0.9560" stroke="#d6d6d6" stroke-width="0.0080"/><circle r="0.9520" stroke="#cecece" stroke-width="0.0080"/><circle r="0.9480" stroke="#c5c5c5" stroke-width="0.0080"/><circle r="0.9440" stroke="#c6c6c6" stroke-width="0.0080"/><circle r="0.9400" stroke="#bebebe" stroke-width="0.0080"/><circle r="0.9360" stroke="#bebebe" stroke-width="0.0080"/><circle r="0.9320" stroke="#c2c2c2" stroke-width="0.0080"/><circle r="0.9280" stroke="#c1c1c1" stroke-width="0.0080"/><circle r="0.9240" stroke="#bebebe" stroke-width="0.0080"/><circle r="0.9200" stroke="#c2c2c2" stroke-width="0.0080"/><circle r="0.9160" stroke="#c7c7c7" stroke-width="0.0080"/><circle r="0.9120" stroke="#c4c4c4" stroke-width="0.0080"/><circle r="0.9080" stroke="#c2c2c2" stroke-width="0.0080"/><circle r="0.9040" stroke="#cccccc" stroke-width="0.0080"/><circle r="0.9000" stroke="#c6c6c6" stroke-width="0.0080"/><circle r="0.8960" stroke="#c5c5c5" stroke-width="0.0080"/><circle r="0.8920" stroke="#c9c9c9" stroke-width="0.0080"/><circle r="0.8880" stroke="#c8c8c8" stroke-width="0.0080"/><circle r="0.8840" stroke="#cbcbcb" stroke-width="0.0080"/><circle r="0.8800" stroke="#c3c3c3" stroke-width="0.0080"/><circle r="0.8760" stroke="#c5c5c5" stroke-width="0.0080"/><circle r="0.8720" stroke="#e3e3e3" stroke-width="0.0080"/><circle r="0.8680" stroke="#eaeaea" stroke-width="0.0080"/><circle r="0.8640" stroke="#e7e7e7" stroke-width="0.0080"/><circle r="0.8600" stroke="#e9e9e9" stroke-width="0.0080"/><circle r="0.8560" stroke="#ececec" stroke-width="0.0080"/><circle r="0.8520" stroke="#dedede" stroke-width="0.0080"/><circle r="0.8480" stroke="#d9d9d9" stroke-width="0.0080"/><circle r="0.8440" stroke="#e0e0e0" stroke-width="0.0080"/><circle r="0.8400" stroke="#dcdcdc" stroke-width="0.0080"/><circle r="0.8360" stroke="#e0e0e0" stroke-width="0.0080"/><circle r="0.8320" stroke="#dedede" stroke-width="0.0080"/><circle r="0.8280" stroke="#dedede" stroke-width="0.0080"/><circle r="0.8240" stroke="#dfdfdf" stroke-width="0.0080"/><circle r="0.8200" stroke="#e0e0e0" stroke-width="0.0080"/><circle r="0.8160" stroke="#e5e5e5" stroke-width="0.0080"/><circle r="0.8120" stroke="#dcdcdc" stroke-width="0.0080"/><circle r="0.8080" stroke="#e3e3e3" stroke-width="0.0080"/><circle r="0.8040" stroke="#e1e1e1" stroke-width="0.0080"/><circle r="0.8000" stroke="#dcdcdc" stroke-width="0.0080"/><circle r="0.7960" stroke="#dadada" stroke-width="0.0080"/><circle r="0.7920" stroke="#dadada" stroke-width="0.0080"/><circle r="0.7880" stroke="#dedede" stroke-width="0.0080"/><circle r="0.7840" stroke="#dcdcdc" stroke-width="0.0080"/><circle r="0.7800" stroke="#d2d2d2" stroke-width="0.0080"/><circle r="0.7760" stroke="#d3d3d3" stroke-width="0.0080"/><circle r="0.7720" stroke="#d6d6d6" stroke-width="0.0080"/><circle r="0.7680" stroke="#d4d4d4" stroke-width="0.0080"/><circle r="0.7640" stroke="#dddddd" stroke-width="0.0080"/><circle r="0.7600" stroke="#d5d5d5" stroke-width="0.0080"/><circle r="0.7560" stroke="#dedede" stroke-width="0.0080"/><circle r="0.7520" stroke="#d9d9d9" stroke-width="0.0080"/><circle r="0.7480" stroke="#dadada" stroke-width="0.0080"/><circle r="0.7440" stroke="#e0e0e0" stroke-width="0.0080"/><circle r="0.7400" stroke="#e2e2e2" stroke-width="0.0080"/><circle r="0.7360" stroke="#dedede" stroke-width="0.0080"/><circle r="0.7320" stroke="#dadada" stroke-width="0.0080"/><circle r="0.7280" stroke="#dadada" stroke-width="0.0080"/><circle r="0.7240" stroke="#d9d9d9" stroke-width="0.0080"/><circle r="0.7200" stroke="#dedede" stroke-width="0.0080"/><circle r="0.7160" stroke="#d8d8d8" stroke-width="0.0080"/><circle r="0.7120" stroke="#d8d8d8" stroke-width="0.0080"/><circle r="0.7080" stroke="#d9d9d9" stroke-width="0.0080"/><circle r="0.7040" stroke="#dbdbdb" stroke-width="0.0080"/><circle r="0.7000" stroke="#d8d8d8" stroke-width="0.0080"/><circle r="0.6960" stroke="#d1d1d1" stroke-width="0.0080"/><circle r="0.6920" stroke="#d7d7d7" stroke-width="0.0080"/><circle r="0.6880" stroke="#d0d0d0" stroke-width="0.0080"/><circle r="0.6840" stroke="#d4d4d4" stroke-width="0.0080"/><circle r="0.6800" stroke="#d4d4d4" stroke-width="0.0080"/><circle r="0.6760" stroke="#d1d1d1" stroke-width="0.0080"/><circle r="0.6720" stroke="#d0d0d0" stroke-width="0.0080"/><circle r="0.6680" stroke="#cdcdcd" stroke-width="0.0080"/><circle r="0.6640" stroke="#c9c9c9" stroke-width="0.0080"/><circle r="0.6600" stroke="#c9c9c9" stroke-width="0.0080"/><circle r="0.6560" stroke="#c9c9c9" stroke-width="0.0080"/><circle r="0.6520" stroke="#c8c8c8" stroke-width="0.0080"/><circle r="0.6480" stroke="#cfcfcf" stroke-width="0.0080"/><circle r="0.6440" stroke="#d0d0d0" stroke-width="0.0080"/><circle r="0.6400" stroke="#c8c8c8" stroke-width="0.0080"/><circle r="0.6360" stroke="#d0d0d0" stroke-width="0.0080"/><circle r="0.6320" stroke="#cccccc" stroke-width="0.0080"/><circle r="0.6280" stroke="#cacaca" stroke-width="0.0080"/><circle r="0.6240" stroke="#c8c8c8" stroke-width="0.0080"/><circle r="0.6200" stroke="#d0d0d0" stroke-width="0.0080"/><circle r="0.6160" stroke="#c9c9c9" stroke-width="0.0080"/><circle r="0.6120" stroke="#cacaca" stroke-width="0.0080"/><circle r="0.6080" stroke="#cdcdcd" stroke-width="0.0080"/><circle r="0.6040" stroke="#cecece" stroke-width="0.0080"/><circle r="0.6000" stroke="#cdcdcd" stroke-width="0.0080"/><circle r="0.5960" stroke="#d2d2d2" stroke-width="0.0080"/><circle r="0.5920" stroke="#d2d2d2" stroke-width="0.0080"/><circle r="0.5880" stroke="#d1d1d1" stroke-width="0.0080"/><circle r="0.5840" stroke="#cccccc" stroke-width="0.0080"/><circle r="0.5800" stroke="#d0d0d0" stroke-width="0.0080"/><circle r="0.5760" stroke="#cecece" stroke-width="0.0080"/><circle r="0.5720" stroke="#cecece" stroke-width="0.0080"/><circle r="0.5680" stroke="#cdcdcd" stroke-width="0.0080"/><circle r="0.5640" stroke="#cbcbcb" stroke-width="0.0080"/><circle r="0.5600" stroke="#d1d1d1" stroke-width="0.0080"/><circle r="0.5560" stroke="#d0d0d0" stroke-width="0.0080"/><circle r="0.5520" stroke="#cacaca" stroke-width="0.0080"/><circle r="0.5480" stroke="#cacaca" stroke-width="0.0080"/><circle r="0.5440" stroke="#cacaca" stroke-width="0.0080"/><circle r="0.5400" stroke="#cfcfcf" stroke-width="0.0080"/><circle r="0.5360" stroke="#c9c9c9" stroke-width="0.0080"/><circle r="0.5320" stroke="#cbcbcb" stroke-width="0.0080"/><circle r="0.5280" stroke="#c9c9c9" stroke-width="0.0080"/><circle r="0.5240" stroke="#d1d1d1" stroke-width="0.0080"/><circle r="0.5200" stroke="#c8c8c8" stroke-width="0.0080"/><circle r="0.5160" stroke="#c9c9c9" stroke-width="0.0080"/><circle r="0.5120" stroke="#cdcdcd" stroke-width="0.0080"/><circle r="0.5080" stroke="#cecece" stroke-width="0.0080"/><circle r="0.5040" stroke="#cacaca" stroke-width="0.0080"/><circle r="0.5000" stroke="#cdcdcd" stroke-width="0.0080"/><circle r="0.4960" stroke="#c9c9c9" stroke-width="0.0080"/><circle r="0.4920" stroke="#cacaca" stroke-width="0.0080"/><circle r="0.4880" stroke="#c8c8c8" stroke-width="0.0080"/><circle r="0.4840" stroke="#cbcbcb" stroke-width="0.0080"/><circle r="0.4800" stroke="#cccccc" stroke-width="0.0080"/><circle r="0.4760" stroke="#cfcfcf" stroke-width="0.0080"/><circle r="0.4720" stroke="#cbcbcb" stroke-width="0.0080"/><circle r="0.4680" stroke="#cecece" stroke-width="0.0080"/><circle r="0.4640" stroke="#cdcdcd" stroke-width="0.0080"/><circle r="0.4600" stroke="#cecece" stroke-width="0.0080"/><circle r="0.4560" stroke="#cecece" stroke-width="0.0080"/><circle r="0.4520" stroke="#cdcdcd" stroke-width="0.0080"/><circle r="0.4480" stroke="#cacaca" stroke-width="0.0080"/><circle r="0.4440" stroke="#cccccc" stroke-width="0.0080"/><circle r="0.4400" stroke="#c8c8c8" stroke-width="0.0080"/></g><g clip-path="url(#cpFront)"><g mask="url(#mFront)"><g transform="translate(817.0 508.0) rotate(12.6) scale(361.0 186.0)" fill="none"><circle r="0.9960" stroke="#dddddd" stroke-width="0.0080"/><circle r="0.9920" stroke="#d4d4d4" stroke-width="0.0080"/><circle r="0.9880" stroke="#cccccc" stroke-width="0.0080"/><circle r="0.9840" stroke="#cdcdcd" stroke-width="0.0080"/><circle r="0.9800" stroke="#c2c2c2" stroke-width="0.0080"/><circle r="0.9760" stroke="#c1c1c1" stroke-width="0.0080"/><circle r="0.9720" stroke="#bdbdbd" stroke-width="0.0080"/><circle r="0.9680" stroke="#c2c2c2" stroke-width="0.0080"/><circle r="0.9640" stroke="#b3b3b3" stroke-width="0.0080"/><circle r="0.9600" stroke="#b2b2b2" stroke-width="0.0080"/><circle r="0.9560" stroke="#b8b8b8" stroke-width="0.0080"/><circle r="0.9520" stroke="#b3b3b3" stroke-width="0.0080"/><circle r="0.9480" stroke="#aeaeae" stroke-width="0.0080"/><circle r="0.9440" stroke="#adadad" stroke-width="0.0080"/><circle r="0.9400" stroke="#a1a1a1" stroke-width="0.0080"/><circle r="0.9360" stroke="#9e9e9e" stroke-width="0.0080"/><circle r="0.9320" stroke="#a2a2a2" stroke-width="0.0080"/><circle r="0.9280" stroke="#9e9e9e" stroke-width="0.0080"/><circle r="0.9240" stroke="#989898" stroke-width="0.0080"/><circle r="0.9200" stroke="#9b9b9b" stroke-width="0.0080"/><circle r="0.9160" stroke="#9d9d9d" stroke-width="0.0080"/><circle r="0.9120" stroke="#979797" stroke-width="0.0080"/><circle r="0.9080" stroke="#919191" stroke-width="0.0080"/><circle r="0.9040" stroke="#9c9c9c" stroke-width="0.0080"/><circle r="0.9000" stroke="#909090" stroke-width="0.0080"/><circle r="0.8960" stroke="#8c8c8c" stroke-width="0.0080"/><circle r="0.8920" stroke="#8f8f8f" stroke-width="0.0080"/><circle r="0.8880" stroke="#8b8b8b" stroke-width="0.0080"/><circle r="0.8840" stroke="#8c8c8c" stroke-width="0.0080"/><circle r="0.8800" stroke="#7e7e7e" stroke-width="0.0080"/><circle r="0.8760" stroke="#6f6f6f" stroke-width="0.0080"/><circle r="0.8720" stroke="#616161" stroke-width="0.0080"/><circle r="0.8680" stroke="#535353" stroke-width="0.0080"/><circle r="0.8640" stroke="#4d4d4d" stroke-width="0.0080"/><circle r="0.8600" stroke="#4f4f4f" stroke-width="0.0080"/><circle r="0.8560" stroke="#6a6a6a" stroke-width="0.0080"/><circle r="0.8520" stroke="#888888" stroke-width="0.0080"/><circle r="0.8480" stroke="#b5b5b5" stroke-width="0.0080"/><circle r="0.8440" stroke="#d3d3d3" stroke-width="0.0080"/><circle r="0.8400" stroke="#cccccc" stroke-width="0.0080"/><circle r="0.8360" stroke="#d0d0d0" stroke-width="0.0080"/><circle r="0.8320" stroke="#cbcbcb" stroke-width="0.0080"/><circle r="0.8280" stroke="#c9c9c9" stroke-width="0.0080"/><circle r="0.8240" stroke="#cbcbcb" stroke-width="0.0080"/><circle r="0.8200" stroke="#cbcbcb" stroke-width="0.0080"/><circle r="0.8160" stroke="#d4d4d4" stroke-width="0.0080"/><circle r="0.8120" stroke="#cbcbcb" stroke-width="0.0080"/><circle r="0.8080" stroke="#d7d7d7" stroke-width="0.0080"/><circle r="0.8040" stroke="#d7d7d7" stroke-width="0.0080"/><circle r="0.8000" stroke="#d3d3d3" stroke-width="0.0080"/><circle r="0.7960" stroke="#d1d1d1" stroke-width="0.0080"/><circle r="0.7920" stroke="#cecece" stroke-width="0.0080"/><circle r="0.7880" stroke="#d2d2d2" stroke-width="0.0080"/><circle r="0.7840" stroke="#cecece" stroke-width="0.0080"/><circle r="0.7800" stroke="#bfbfbf" stroke-width="0.0080"/><circle r="0.7760" stroke="#c0c0c0" stroke-width="0.0080"/><circle r="0.7720" stroke="#c4c4c4" stroke-width="0.0080"/><circle r="0.7680" stroke="#c2c2c2" stroke-width="0.0080"/><circle r="0.7640" stroke="#cecece" stroke-width="0.0080"/><circle r="0.7600" stroke="#c4c4c4" stroke-width="0.0080"/><circle r="0.7560" stroke="#d0d0d0" stroke-width="0.0080"/><circle r="0.7520" stroke="#c9c9c9" stroke-width="0.0080"/><circle r="0.7480" stroke="#cccccc" stroke-width="0.0080"/><circle r="0.7440" stroke="#d0d0d0" stroke-width="0.0080"/><circle r="0.7400" stroke="#cfcfcf" stroke-width="0.0080"/><circle r="0.7360" stroke="#c8c8c8" stroke-width="0.0080"/><circle r="0.7320" stroke="#c2c2c2" stroke-width="0.0080"/><circle r="0.7280" stroke="#c1c1c1" stroke-width="0.0080"/><circle r="0.7240" stroke="#bebebe" stroke-width="0.0080"/><circle r="0.7200" stroke="#c4c4c4" stroke-width="0.0080"/><circle r="0.7160" stroke="#bdbdbd" stroke-width="0.0080"/><circle r="0.7120" stroke="#bfbfbf" stroke-width="0.0080"/><circle r="0.7080" stroke="#c2c2c2" stroke-width="0.0080"/><circle r="0.7040" stroke="#c7c7c7" stroke-width="0.0080"/><circle r="0.7000" stroke="#c5c5c5" stroke-width="0.0080"/><circle r="0.6960" stroke="#bdbdbd" stroke-width="0.0080"/><circle r="0.6920" stroke="#c9c9c9" stroke-width="0.0080"/><circle r="0.6880" stroke="#c2c2c2" stroke-width="0.0080"/><circle r="0.6840" stroke="#c7c7c7" stroke-width="0.0080"/><circle r="0.6800" stroke="#c6c6c6" stroke-width="0.0080"/><circle r="0.6760" stroke="#c2c2c2" stroke-width="0.0080"/><circle r="0.6720" stroke="#c1c1c1" stroke-width="0.0080"/><circle r="0.6680" stroke="#bdbdbd" stroke-width="0.0080"/><circle r="0.6640" stroke="#bababa" stroke-width="0.0080"/><circle r="0.6600" stroke="#bbbbbb" stroke-width="0.0080"/><circle r="0.6560" stroke="#bababa" stroke-width="0.0080"/><circle r="0.6520" stroke="#bababa" stroke-width="0.0080"/><circle r="0.6480" stroke="#c3c3c3" stroke-width="0.0080"/><circle r="0.6440" stroke="#c4c4c4" stroke-width="0.0080"/><circle r="0.6400" stroke="#b9b9b9" stroke-width="0.0080"/><circle r="0.6360" stroke="#c4c4c4" stroke-width="0.0080"/><circle r="0.6320" stroke="#bfbfbf" stroke-width="0.0080"/><circle r="0.6280" stroke="#bcbcbc" stroke-width="0.0080"/><circle r="0.6240" stroke="#b8b8b8" stroke-width="0.0080"/><circle r="0.6200" stroke="#c3c3c3" stroke-width="0.0080"/><circle r="0.6160" stroke="#bababa" stroke-width="0.0080"/><circle r="0.6120" stroke="#bbbbbb" stroke-width="0.0080"/><circle r="0.6080" stroke="#bfbfbf" stroke-width="0.0080"/><circle r="0.6040" stroke="#c0c0c0" stroke-width="0.0080"/><circle r="0.6000" stroke="#bfbfbf" stroke-width="0.0080"/><circle r="0.5960" stroke="#c5c5c5" stroke-width="0.0080"/><circle r="0.5920" stroke="#c6c6c6" stroke-width="0.0080"/><circle r="0.5880" stroke="#c4c4c4" stroke-width="0.0080"/><circle r="0.5840" stroke="#bdbdbd" stroke-width="0.0080"/><circle r="0.5800" stroke="#c3c3c3" stroke-width="0.0080"/><circle r="0.5760" stroke="#c1c1c1" stroke-width="0.0080"/><circle r="0.5720" stroke="#c0c0c0" stroke-width="0.0080"/><circle r="0.5680" stroke="#bfbfbf" stroke-width="0.0080"/><circle r="0.5640" stroke="#bdbdbd" stroke-width="0.0080"/><circle r="0.5600" stroke="#c4c4c4" stroke-width="0.0080"/><circle r="0.5560" stroke="#c4c4c4" stroke-width="0.0080"/><circle r="0.5520" stroke="#bbbbbb" stroke-width="0.0080"/><circle r="0.5480" stroke="#bbbbbb" stroke-width="0.0080"/><circle r="0.5440" stroke="#bbbbbb" stroke-width="0.0080"/><circle r="0.5400" stroke="#c2c2c2" stroke-width="0.0080"/><circle r="0.5360" stroke="#bababa" stroke-width="0.0080"/><circle r="0.5320" stroke="#bdbdbd" stroke-width="0.0080"/><circle r="0.5280" stroke="#bbbbbb" stroke-width="0.0080"/><circle r="0.5240" stroke="#c6c6c6" stroke-width="0.0080"/><circle r="0.5200" stroke="#bababa" stroke-width="0.0080"/><circle r="0.5160" stroke="#bababa" stroke-width="0.0080"/><circle r="0.5120" stroke="#c0c0c0" stroke-width="0.0080"/><circle r="0.5080" stroke="#c1c1c1" stroke-width="0.0080"/><circle r="0.5040" stroke="#bdbdbd" stroke-width="0.0080"/><circle r="0.5000" stroke="#c0c0c0" stroke-width="0.0080"/><circle r="0.4960" stroke="#bbbbbb" stroke-width="0.0080"/><circle r="0.4920" stroke="#bdbdbd" stroke-width="0.0080"/><circle r="0.4880" stroke="#bababa" stroke-width="0.0080"/><circle r="0.4840" stroke="#bebebe" stroke-width="0.0080"/><circle r="0.4800" stroke="#bfbfbf" stroke-width="0.0080"/><circle r="0.4760" stroke="#c4c4c4" stroke-width="0.0080"/><circle r="0.4720" stroke="#bebebe" stroke-width="0.0080"/><circle r="0.4680" stroke="#c2c2c2" stroke-width="0.0080"/><circle r="0.4640" stroke="#c1c1c1" stroke-width="0.0080"/><circle r="0.4600" stroke="#c3c3c3" stroke-width="0.0080"/><circle r="0.4560" stroke="#c3c3c3" stroke-width="0.0080"/><circle r="0.4520" stroke="#c1c1c1" stroke-width="0.0080"/><circle r="0.4480" stroke="#bdbdbd" stroke-width="0.0080"/><circle r="0.4440" stroke="#bfbfbf" stroke-width="0.0080"/><circle r="0.4400" stroke="#bababa" stroke-width="0.0080"/></g></g></g></g>
<polygon points="835,300 935,300 935,372 835,372" fill="url(#gTipFade)"/>
<g filter="url(#sb3)"><g clip-path="url(#cpPurple)"><g transform="translate(817.0 508.0) rotate(12.6) scale(361.0 186.0)" fill="none"><circle r="0.930" stroke="#ffffff" stroke-width="0.19"/><circle r="0.997" stroke="#bd96d9" stroke-width="0.034"/><circle r="0.925" stroke="#8a58ae" stroke-width="0.088"/><circle r="0.873" stroke="#dcd6e2" stroke-width="0.016"/><circle r="0.776" stroke="#7030a0" stroke-width="0.178"/></g></g></g>
<g clip-path="url(#cpStrip)"><g filter="url(#sb3)"><g transform="translate(817.0 508.0) rotate(12.6) scale(361.0 186.0)" fill="none"><circle r="0.9970" stroke="#525252" stroke-width="0.0060"/><circle r="0.9940" stroke="#525252" stroke-width="0.0060"/><circle r="0.9910" stroke="#515151" stroke-width="0.0060"/><circle r="0.9880" stroke="#515151" stroke-width="0.0060"/><circle r="0.9850" stroke="#515151" stroke-width="0.0060"/><circle r="0.9820" stroke="#505050" stroke-width="0.0060"/><circle r="0.9790" stroke="#505050" stroke-width="0.0060"/><circle r="0.9760" stroke="#626262" stroke-width="0.0060"/><circle r="0.9730" stroke="#acacac" stroke-width="0.0060"/><circle r="0.9700" stroke="#505050" stroke-width="0.0060"/><circle r="0.9670" stroke="#505050" stroke-width="0.0060"/><circle r="0.9640" stroke="#4f4f4f" stroke-width="0.0060"/><circle r="0.9610" stroke="#4f4f4f" stroke-width="0.0060"/><circle r="0.9580" stroke="#4f4f4f" stroke-width="0.0060"/><circle r="0.9550" stroke="#4f4f4f" stroke-width="0.0060"/><circle r="0.9520" stroke="#4e4e4e" stroke-width="0.0060"/><circle r="0.9490" stroke="#4e4e4e" stroke-width="0.0060"/><circle r="0.9460" stroke="#4e4e4e" stroke-width="0.0060"/><circle r="0.9430" stroke="#4e4e4e" stroke-width="0.0060"/><circle r="0.9400" stroke="#4e4e4e" stroke-width="0.0060"/><circle r="0.9370" stroke="#4e4e4e" stroke-width="0.0060"/><circle r="0.9340" stroke="#4e4e4e" stroke-width="0.0060"/><circle r="0.9310" stroke="#4f4f4f" stroke-width="0.0060"/><circle r="0.9280" stroke="#4f4f4f" stroke-width="0.0060"/><circle r="0.9250" stroke="#4f4f4f" stroke-width="0.0060"/><circle r="0.9220" stroke="#4f4f4f" stroke-width="0.0060"/><circle r="0.9190" stroke="#4f4f4f" stroke-width="0.0060"/><circle r="0.9160" stroke="#4f4f4f" stroke-width="0.0060"/><circle r="0.9130" stroke="#4f4f4f" stroke-width="0.0060"/><circle r="0.9100" stroke="#4f4f4f" stroke-width="0.0060"/><circle r="0.9070" stroke="#4f4f4f" stroke-width="0.0060"/><circle r="0.9040" stroke="#4f4f4f" stroke-width="0.0060"/><circle r="0.9010" stroke="#505050" stroke-width="0.0060"/><circle r="0.8980" stroke="#505050" stroke-width="0.0060"/><circle r="0.8950" stroke="#505050" stroke-width="0.0060"/><circle r="0.8920" stroke="#505050" stroke-width="0.0060"/><circle r="0.8890" stroke="#505050" stroke-width="0.0060"/><circle r="0.8860" stroke="#505050" stroke-width="0.0060"/><circle r="0.8830" stroke="#7c7c7c" stroke-width="0.0060"/><circle r="0.8800" stroke="#b2b2b2" stroke-width="0.0060"/><circle r="0.8770" stroke="#b1b1b1" stroke-width="0.0060"/><circle r="0.8740" stroke="#959595" stroke-width="0.0060"/><circle r="0.8710" stroke="#949494" stroke-width="0.0060"/><circle r="0.8680" stroke="#939393" stroke-width="0.0060"/><circle r="0.8650" stroke="#8a8a8a" stroke-width="0.0060"/><circle r="0.8620" stroke="#797979" stroke-width="0.0060"/><circle r="0.8590" stroke="#646464" stroke-width="0.0060"/><circle r="0.8560" stroke="#525252" stroke-width="0.0060"/><circle r="0.8530" stroke="#525252" stroke-width="0.0060"/><circle r="0.8500" stroke="#525252" stroke-width="0.0060"/><circle r="0.8470" stroke="#525252" stroke-width="0.0060"/><circle r="0.8440" stroke="#525252" stroke-width="0.0060"/><circle r="0.8410" stroke="#535353" stroke-width="0.0060"/><circle r="0.8380" stroke="#535353" stroke-width="0.0060"/><circle r="0.8350" stroke="#535353" stroke-width="0.0060"/><circle r="0.8320" stroke="#535353" stroke-width="0.0060"/><circle r="0.8290" stroke="#535353" stroke-width="0.0060"/><circle r="0.8260" stroke="#535353" stroke-width="0.0060"/><circle r="0.8230" stroke="#535353" stroke-width="0.0060"/><circle r="0.8200" stroke="#535353" stroke-width="0.0060"/><circle r="0.8170" stroke="#535353" stroke-width="0.0060"/><circle r="0.8140" stroke="#535353" stroke-width="0.0060"/><circle r="0.8110" stroke="#545454" stroke-width="0.0060"/><circle r="0.8080" stroke="#545454" stroke-width="0.0060"/><circle r="0.8050" stroke="#545454" stroke-width="0.0060"/><circle r="0.8020" stroke="#545454" stroke-width="0.0060"/><circle r="0.7990" stroke="#545454" stroke-width="0.0060"/><circle r="0.7960" stroke="#545454" stroke-width="0.0060"/><circle r="0.7930" stroke="#545454" stroke-width="0.0060"/><circle r="0.7900" stroke="#555555" stroke-width="0.0060"/><circle r="0.7870" stroke="#555555" stroke-width="0.0060"/><circle r="0.7840" stroke="#555555" stroke-width="0.0060"/><circle r="0.7810" stroke="#555555" stroke-width="0.0060"/><circle r="0.7780" stroke="#555555" stroke-width="0.0060"/><circle r="0.7750" stroke="#565656" stroke-width="0.0060"/><circle r="0.7720" stroke="#565656" stroke-width="0.0060"/><circle r="0.7690" stroke="#565656" stroke-width="0.0060"/><circle r="0.7660" stroke="#565656" stroke-width="0.0060"/><circle r="0.7630" stroke="#565656" stroke-width="0.0060"/><circle r="0.7600" stroke="#575757" stroke-width="0.0060"/><circle r="0.7570" stroke="#575757" stroke-width="0.0060"/><circle r="0.7540" stroke="#575757" stroke-width="0.0060"/><circle r="0.7510" stroke="#575757" stroke-width="0.0060"/><circle r="0.7480" stroke="#575757" stroke-width="0.0060"/><circle r="0.7450" stroke="#585858" stroke-width="0.0060"/><circle r="0.7420" stroke="#585858" stroke-width="0.0060"/><circle r="0.7390" stroke="#585858" stroke-width="0.0060"/><circle r="0.7360" stroke="#585858" stroke-width="0.0060"/><circle r="0.7330" stroke="#585858" stroke-width="0.0060"/><circle r="0.7300" stroke="#585858" stroke-width="0.0060"/><circle r="0.7270" stroke="#585858" stroke-width="0.0060"/><circle r="0.7240" stroke="#595959" stroke-width="0.0060"/><circle r="0.7210" stroke="#595959" stroke-width="0.0060"/><circle r="0.7180" stroke="#595959" stroke-width="0.0060"/><circle r="0.7150" stroke="#595959" stroke-width="0.0060"/><circle r="0.7120" stroke="#595959" stroke-width="0.0060"/><circle r="0.7090" stroke="#595959" stroke-width="0.0060"/><circle r="0.7060" stroke="#595959" stroke-width="0.0060"/><circle r="0.7030" stroke="#595959" stroke-width="0.0060"/><circle r="0.7000" stroke="#595959" stroke-width="0.0060"/><circle r="0.6970" stroke="#5a5a5a" stroke-width="0.0060"/><circle r="0.6940" stroke="#5a5a5a" stroke-width="0.0060"/><circle r="0.6910" stroke="#5a5a5a" stroke-width="0.0060"/><circle r="0.6880" stroke="#5a5a5a" stroke-width="0.0060"/><circle r="0.6850" stroke="#5a5a5a" stroke-width="0.0060"/><circle r="0.6820" stroke="#5c5c5c" stroke-width="0.0060"/><circle r="0.6790" stroke="#5f5f5f" stroke-width="0.0060"/><circle r="0.6760" stroke="#626262" stroke-width="0.0060"/><circle r="0.6730" stroke="#656565" stroke-width="0.0060"/><circle r="0.6700" stroke="#686868" stroke-width="0.0060"/><circle r="0.6670" stroke="#6b6b6b" stroke-width="0.0060"/><circle r="0.6640" stroke="#6e6e6e" stroke-width="0.0060"/><circle r="0.6610" stroke="#737373" stroke-width="0.0060"/><circle r="0.6580" stroke="#787878" stroke-width="0.0060"/><circle r="0.6550" stroke="#7d7d7d" stroke-width="0.0060"/><circle r="0.6520" stroke="#838383" stroke-width="0.0060"/><circle r="0.6490" stroke="#888888" stroke-width="0.0060"/><circle r="0.6460" stroke="#8e8e8e" stroke-width="0.0060"/><circle r="0.6430" stroke="#939393" stroke-width="0.0060"/><circle r="0.6400" stroke="#989898" stroke-width="0.0060"/><circle r="0.6370" stroke="#9e9e9e" stroke-width="0.0060"/><circle r="0.6340" stroke="#a3a3a3" stroke-width="0.0060"/><circle r="0.6310" stroke="#a9a9a9" stroke-width="0.0060"/><circle r="0.6280" stroke="#aeaeae" stroke-width="0.0060"/><circle r="0.6250" stroke="#b3b3b3" stroke-width="0.0060"/><circle r="0.6220" stroke="#b7b7b7" stroke-width="0.0060"/><circle r="0.6190" stroke="#bababa" stroke-width="0.0060"/><circle r="0.6160" stroke="#bdbdbd" stroke-width="0.0060"/><circle r="0.6130" stroke="#bfbfbf" stroke-width="0.0060"/><circle r="0.6100" stroke="#c2c2c2" stroke-width="0.0060"/><circle r="0.6070" stroke="#c5c5c5" stroke-width="0.0060"/><circle r="0.6040" stroke="#c7c7c7" stroke-width="0.0060"/><circle r="0.6010" stroke="#cacaca" stroke-width="0.0060"/><circle r="0.5980" stroke="#cccccc" stroke-width="0.0060"/><circle r="0.5950" stroke="#cdcdcd" stroke-width="0.0060"/><circle r="0.5920" stroke="#cecece" stroke-width="0.0060"/><circle r="0.5890" stroke="#cecece" stroke-width="0.0060"/><circle r="0.5860" stroke="#cfcfcf" stroke-width="0.0060"/><circle r="0.5830" stroke="#d0d0d0" stroke-width="0.0060"/><circle r="0.5800" stroke="#d1d1d1" stroke-width="0.0060"/><circle r="0.5770" stroke="#d1d1d1" stroke-width="0.0060"/><circle r="0.5740" stroke="#d2d2d2" stroke-width="0.0060"/><circle r="0.5710" stroke="#d3d3d3" stroke-width="0.0060"/><circle r="0.5680" stroke="#d4d4d4" stroke-width="0.0060"/><circle r="0.5650" stroke="#d4d4d4" stroke-width="0.0060"/><circle r="0.5620" stroke="#d5d5d5" stroke-width="0.0060"/><circle r="0.5590" stroke="#d6d6d6" stroke-width="0.0060"/><circle r="0.5560" stroke="#d6d6d6" stroke-width="0.0060"/><circle r="0.5530" stroke="#d6d6d6" stroke-width="0.0060"/><circle r="0.5500" stroke="#d7d7d7" stroke-width="0.0060"/><circle r="0.5470" stroke="#d7d7d7" stroke-width="0.0060"/><circle r="0.5440" stroke="#d7d7d7" stroke-width="0.0060"/><circle r="0.5410" stroke="#d7d7d7" stroke-width="0.0060"/><circle r="0.5380" stroke="#d7d7d7" stroke-width="0.0060"/><circle r="0.5350" stroke="#d8d8d8" stroke-width="0.0060"/><circle r="0.5320" stroke="#d8d8d8" stroke-width="0.0060"/><circle r="0.5290" stroke="#d8d8d8" stroke-width="0.0060"/><circle r="0.5260" stroke="#d8d8d8" stroke-width="0.0060"/><circle r="0.5230" stroke="#d8d8d8" stroke-width="0.0060"/><circle r="0.5200" stroke="#d9d9d9" stroke-width="0.0060"/><circle r="0.5170" stroke="#d9d9d9" stroke-width="0.0060"/><circle r="0.5140" stroke="#d9d9d9" stroke-width="0.0060"/><circle r="0.5110" stroke="#d9d9d9" stroke-width="0.0060"/><circle r="0.5080" stroke="#d9d9d9" stroke-width="0.0060"/><circle r="0.5050" stroke="#dadada" stroke-width="0.0060"/><circle r="0.5020" stroke="#dadada" stroke-width="0.0060"/><circle r="0.4990" stroke="#dadada" stroke-width="0.0060"/><circle r="0.4960" stroke="#dadada" stroke-width="0.0060"/><circle r="0.4930" stroke="#dadada" stroke-width="0.0060"/><circle r="0.4900" stroke="#dbdbdb" stroke-width="0.0060"/><circle r="0.4870" stroke="#dbdbdb" stroke-width="0.0060"/><circle r="0.4840" stroke="#dbdbdb" stroke-width="0.0060"/><circle r="0.4810" stroke="#dbdbdb" stroke-width="0.0060"/><circle r="0.4780" stroke="#dbdbdb" stroke-width="0.0060"/><circle r="0.4750" stroke="#dcdcdc" stroke-width="0.0060"/><circle r="0.4720" stroke="#dcdcdc" stroke-width="0.0060"/><circle r="0.4690" stroke="#dcdcdc" stroke-width="0.0060"/><circle r="0.4660" stroke="#dcdcdc" stroke-width="0.0060"/><circle r="0.4630" stroke="#dcdcdc" stroke-width="0.0060"/><circle r="0.4600" stroke="#dddddd" stroke-width="0.0060"/><circle r="0.4570" stroke="#dddddd" stroke-width="0.0060"/><circle r="0.4540" stroke="#dddddd" stroke-width="0.0060"/><circle r="0.4510" stroke="#dddddd" stroke-width="0.0060"/><circle r="0.4480" stroke="#dddddd" stroke-width="0.0060"/><circle r="0.4450" stroke="#dedede" stroke-width="0.0060"/><circle r="0.4420" stroke="#dedede" stroke-width="0.0060"/><circle r="0.4395" stroke="#dedede" stroke-width="0.0050"/></g></g></g>
<g clip-path="url(#cpPlanet)">
<rect x="640" y="310" width="380" height="370" fill="#282828"/>
<g filter="url(#sb2)"><g transform="translate(826.5 496.4) rotate(5.5) scale(1 1.0000)"><ellipse cx="0" cy="84.15" rx="117.25" ry="78.46" fill="#242424"/><rect x="-169.0" y="-169.0" width="338.0" height="321.37" fill="#242424"/><ellipse cx="0" cy="81.05" rx="121.13" ry="81.05" fill="#242424"/><rect x="-169.0" y="-169.0" width="338.0" height="315.77" fill="#242424"/><ellipse cx="0" cy="77.86" rx="124.87" ry="83.55" fill="#252525"/><rect x="-169.0" y="-169.0" width="338.0" height="309.99" fill="#252525"/><ellipse cx="0" cy="74.58" rx="128.45" ry="85.95" fill="#262626"/><rect x="-169.0" y="-169.0" width="338.0" height="304.04" fill="#262626"/><ellipse cx="0" cy="71.20" rx="131.87" ry="88.24" fill="#262626"/><rect x="-169.0" y="-169.0" width="338.0" height="297.92" fill="#262626"/><ellipse cx="0" cy="67.74" rx="135.13" ry="90.42" fill="#272727"/><rect x="-169.0" y="-169.0" width="338.0" height="291.65" fill="#272727"/><ellipse cx="0" cy="64.19" rx="138.23" ry="92.50" fill="#282828"/><rect x="-169.0" y="-169.0" width="338.0" height="285.23" fill="#282828"/><ellipse cx="0" cy="60.57" rx="141.16" ry="94.46" fill="#292929"/><rect x="-169.0" y="-169.0" width="338.0" height="278.67" fill="#292929"/><ellipse cx="0" cy="56.87" rx="143.92" ry="96.30" fill="#2a2a2a"/><rect x="-169.0" y="-169.0" width="338.0" height="271.97" fill="#2a2a2a"/><ellipse cx="0" cy="53.10" rx="146.50" ry="98.03" fill="#2c2c2c"/><rect x="-169.0" y="-169.0" width="338.0" height="265.15" fill="#2c2c2c"/><ellipse cx="0" cy="49.27" rx="148.91" ry="99.64" fill="#2d2d2d"/><rect x="-169.0" y="-169.0" width="338.0" height="258.21" fill="#2d2d2d"/><ellipse cx="0" cy="45.38" rx="151.13" ry="101.13" fill="#2f2f2f"/><rect x="-169.0" y="-169.0" width="338.0" height="251.17" fill="#2f2f2f"/><ellipse cx="0" cy="41.43" rx="153.17" ry="102.49" fill="#313131"/><rect x="-169.0" y="-169.0" width="338.0" height="244.02" fill="#313131"/><ellipse cx="0" cy="37.43" rx="155.02" ry="103.73" fill="#323232"/><rect x="-169.0" y="-169.0" width="338.0" height="236.78" fill="#323232"/><ellipse cx="0" cy="33.39" rx="156.69" ry="104.84" fill="#343434"/><rect x="-169.0" y="-169.0" width="338.0" height="229.46" fill="#343434"/><ellipse cx="0" cy="29.30" rx="158.16" ry="105.83" fill="#353535"/><rect x="-169.0" y="-169.0" width="338.0" height="222.06" fill="#353535"/><ellipse cx="0" cy="25.18" rx="159.44" ry="106.68" fill="#373737"/><rect x="-169.0" y="-169.0" width="338.0" height="214.60" fill="#373737"/><ellipse cx="0" cy="21.03" rx="160.52" ry="107.41" fill="#393939"/><rect x="-169.0" y="-169.0" width="338.0" height="207.09" fill="#393939"/><ellipse cx="0" cy="16.86" rx="161.41" ry="108.01" fill="#3b3b3b"/><rect x="-169.0" y="-169.0" width="338.0" height="199.53" fill="#3b3b3b"/><ellipse cx="0" cy="12.66" rx="162.11" ry="108.47" fill="#3e3e3e"/><rect x="-169.0" y="-169.0" width="338.0" height="191.93" fill="#3e3e3e"/><ellipse cx="0" cy="8.45" rx="162.60" ry="108.80" fill="#404040"/><rect x="-169.0" y="-169.0" width="338.0" height="184.30" fill="#404040"/><ellipse cx="0" cy="4.23" rx="162.90" ry="109.00" fill="#424242"/><rect x="-169.0" y="-169.0" width="338.0" height="176.65" fill="#424242"/><ellipse cx="0" cy="-0.00" rx="163.00" ry="109.07" fill="#b8b8b8"/><rect x="-169.0" y="-169.0" width="338.0" height="169.00" fill="#b8b8b8"/><ellipse cx="0" cy="-4.23" rx="162.90" ry="109.00" fill="#bcbcbc"/><rect x="-169.0" y="-169.0" width="338.0" height="161.35" fill="#bcbcbc"/><ellipse cx="0" cy="-8.45" rx="162.60" ry="108.80" fill="#bfbfbf"/><rect x="-169.0" y="-169.0" width="338.0" height="153.70" fill="#bfbfbf"/><ellipse cx="0" cy="-12.66" rx="162.11" ry="108.47" fill="#c3c3c3"/><rect x="-169.0" y="-169.0" width="338.0" height="146.07" fill="#c3c3c3"/><ellipse cx="0" cy="-16.86" rx="161.41" ry="108.01" fill="#aeaeae"/><rect x="-169.0" y="-169.0" width="338.0" height="138.47" fill="#aeaeae"/><ellipse cx="0" cy="-21.03" rx="160.52" ry="107.41" fill="#646464"/><rect x="-169.0" y="-169.0" width="338.0" height="130.91" fill="#646464"/><ellipse cx="0" cy="-25.18" rx="159.44" ry="106.68" fill="#626262"/><rect x="-169.0" y="-169.0" width="338.0" height="123.40" fill="#626262"/><ellipse cx="0" cy="-29.30" rx="158.16" ry="105.83" fill="#616161"/><rect x="-169.0" y="-169.0" width="338.0" height="115.94" fill="#616161"/><ellipse cx="0" cy="-33.39" rx="156.69" ry="104.84" fill="#5f5f5f"/><rect x="-169.0" y="-169.0" width="338.0" height="108.54" fill="#5f5f5f"/><ellipse cx="0" cy="-37.43" rx="155.02" ry="103.73" fill="#7c7c7c"/><rect x="-169.0" y="-169.0" width="338.0" height="101.22" fill="#7c7c7c"/><ellipse cx="0" cy="-41.43" rx="153.17" ry="102.49" fill="#d6d6d6"/><rect x="-169.0" y="-169.0" width="338.0" height="93.98" fill="#d6d6d6"/><ellipse cx="0" cy="-45.38" rx="151.13" ry="101.13" fill="#dddddd"/><rect x="-169.0" y="-169.0" width="338.0" height="86.83" fill="#dddddd"/><ellipse cx="0" cy="-49.27" rx="148.91" ry="99.64" fill="#c4c4c4"/><rect x="-169.0" y="-169.0" width="338.0" height="79.79" fill="#c4c4c4"/><ellipse cx="0" cy="-53.10" rx="146.50" ry="98.03" fill="#e0e0e0"/><rect x="-169.0" y="-169.0" width="338.0" height="72.85" fill="#e0e0e0"/><ellipse cx="0" cy="-56.87" rx="143.92" ry="96.30" fill="#c8c8c8"/><rect x="-169.0" y="-169.0" width="338.0" height="66.03" fill="#c8c8c8"/><ellipse cx="0" cy="-60.57" rx="141.16" ry="94.46" fill="#7b7b7b"/><rect x="-169.0" y="-169.0" width="338.0" height="59.33" fill="#7b7b7b"/><ellipse cx="0" cy="-64.19" rx="138.23" ry="92.50" fill="#797979"/><rect x="-169.0" y="-169.0" width="338.0" height="52.77" fill="#797979"/><ellipse cx="0" cy="-67.74" rx="135.13" ry="90.42" fill="#777777"/><rect x="-169.0" y="-169.0" width="338.0" height="46.35" fill="#777777"/><ellipse cx="0" cy="-71.20" rx="131.87" ry="88.24" fill="#bebebe"/><rect x="-169.0" y="-169.0" width="338.0" height="40.08" fill="#bebebe"/><ellipse cx="0" cy="-74.58" rx="128.45" ry="85.95" fill="#e4e4e4"/><rect x="-169.0" y="-169.0" width="338.0" height="33.96" fill="#e4e4e4"/><ellipse cx="0" cy="-77.86" rx="124.87" ry="83.55" fill="#e8e8e8"/><rect x="-169.0" y="-169.0" width="338.0" height="28.01" fill="#e8e8e8"/><ellipse cx="0" cy="-81.05" rx="121.13" ry="81.05" fill="#ebebeb"/><rect x="-169.0" y="-169.0" width="338.0" height="22.23" fill="#ebebeb"/><ellipse cx="0" cy="-84.15" rx="117.25" ry="78.46" fill="#808080"/><rect x="-169.0" y="-169.0" width="338.0" height="16.63" fill="#808080"/><ellipse cx="0" cy="-87.14" rx="113.23" ry="75.77" fill="#5e5e5e"/><rect x="-169.0" y="-169.0" width="338.0" height="11.22" fill="#5e5e5e"/><ellipse cx="0" cy="-90.02" rx="109.07" ry="72.98" fill="#616161"/><ellipse cx="0" cy="-92.79" rx="104.77" ry="70.11" fill="#7b7b7b"/><ellipse cx="0" cy="-95.45" rx="100.35" ry="67.15" fill="#8a8a8a"/><ellipse cx="0" cy="-98.00" rx="95.81" ry="64.11" fill="#8c8c8c"/><ellipse cx="0" cy="-100.42" rx="91.15" ry="60.99" fill="#818181"/><ellipse cx="0" cy="-102.73" rx="86.38" ry="57.80" fill="#666666"/><ellipse cx="0" cy="-104.90" rx="81.50" ry="54.53" fill="#656565"/><ellipse cx="0" cy="-106.95" rx="76.52" ry="51.20" fill="#656565"/><ellipse cx="0" cy="-108.87" rx="71.45" ry="47.81" fill="#646464"/><ellipse cx="0" cy="-110.66" rx="66.30" ry="44.36" fill="#656565"/><ellipse cx="0" cy="-112.31" rx="61.06" ry="40.86" fill="#676767"/><ellipse cx="0" cy="-113.83" rx="55.75" ry="37.30" fill="#696969"/><ellipse cx="0" cy="-115.20" rx="50.37" ry="33.70" fill="#6c6c6c"/><ellipse cx="0" cy="-116.44" rx="44.93" ry="30.06" fill="#717171"/><ellipse cx="0" cy="-117.53" rx="39.43" ry="26.39" fill="#767676"/><ellipse cx="0" cy="-118.49" rx="33.89" ry="22.68" fill="#7f7f7f"/><ellipse cx="0" cy="-119.29" rx="28.30" ry="18.94" fill="#8e8e8e"/><ellipse cx="0" cy="-119.95" rx="22.69" ry="15.18" fill="#707070"/><ellipse cx="0" cy="-120.47" rx="17.04" ry="11.40" fill="#818181"/><ellipse cx="0" cy="-120.84" rx="11.37" ry="7.61" fill="#7f7f7f"/><ellipse cx="0" cy="-121.06" rx="5.69" ry="3.81" fill="#727272"/></g></g>
<rect x="640" y="310" width="380" height="370" fill="url(#gLight)"/>
<rect x="640" y="310" width="380" height="370" fill="url(#gLimb)"/>
<rect x="640" y="310" width="380" height="370" fill="url(#gLeft)"/>
<g filter="url(#sb2)"><ellipse cx="826.5" cy="496.4" rx="160.0" ry="160.0" transform="rotate(5.5 826.5 496.4)" fill="none" stroke="url(#gRim)" stroke-width="13"/></g>
</g>
<g clip-path="url(#cpPlanet)"><g clip-path="url(#cpFront)"><g filter="url(#sb2)"><g clip-path="url(#cpBelowStrip)"><g opacity=".12"><g transform="translate(817.0 508.0) rotate(12.6) scale(361.0 186.0)" fill="none"><circle r="0.6780" stroke="#d0d0d0" stroke-width="0.0120"/><circle r="0.6720" stroke="#cecece" stroke-width="0.0120"/><circle r="0.6660" stroke="#cccccc" stroke-width="0.0120"/><circle r="0.6600" stroke="#cacaca" stroke-width="0.0120"/><circle r="0.6540" stroke="#cacaca" stroke-width="0.0120"/><circle r="0.6480" stroke="#cbcbcb" stroke-width="0.0120"/><circle r="0.6420" stroke="#cbcbcb" stroke-width="0.0120"/><circle r="0.6360" stroke="#cccccc" stroke-width="0.0120"/><circle r="0.6300" stroke="#cccccc" stroke-width="0.0120"/><circle r="0.6240" stroke="#cccccc" stroke-width="0.0120"/><circle r="0.6180" stroke="#cdcdcd" stroke-width="0.0120"/><circle r="0.6120" stroke="#cdcdcd" stroke-width="0.0120"/><circle r="0.6060" stroke="#cdcdcd" stroke-width="0.0120"/><circle r="0.6000" stroke="#cecece" stroke-width="0.0120"/><circle r="0.5940" stroke="#cecece" stroke-width="0.0120"/><circle r="0.5880" stroke="#cecece" stroke-width="0.0120"/><circle r="0.5820" stroke="#cecece" stroke-width="0.0120"/><circle r="0.5760" stroke="#cecece" stroke-width="0.0120"/><circle r="0.5700" stroke="#cecece" stroke-width="0.0120"/><circle r="0.5640" stroke="#cecece" stroke-width="0.0120"/><circle r="0.5580" stroke="#cecece" stroke-width="0.0120"/><circle r="0.5520" stroke="#cdcdcd" stroke-width="0.0120"/><circle r="0.5460" stroke="#cdcdcd" stroke-width="0.0120"/><circle r="0.5400" stroke="#cdcdcd" stroke-width="0.0120"/><circle r="0.5340" stroke="#cdcdcd" stroke-width="0.0120"/><circle r="0.5280" stroke="#cdcdcd" stroke-width="0.0120"/><circle r="0.5220" stroke="#cdcdcd" stroke-width="0.0120"/><circle r="0.5160" stroke="#cdcdcd" stroke-width="0.0120"/><circle r="0.5100" stroke="#cdcdcd" stroke-width="0.0120"/><circle r="0.5040" stroke="#cdcdcd" stroke-width="0.0120"/><circle r="0.4980" stroke="#cdcdcd" stroke-width="0.0120"/><circle r="0.4920" stroke="#cdcdcd" stroke-width="0.0120"/><circle r="0.4860" stroke="#cdcdcd" stroke-width="0.0120"/><circle r="0.4800" stroke="#cdcdcd" stroke-width="0.0120"/><circle r="0.4740" stroke="#cccccc" stroke-width="0.0120"/><circle r="0.4680" stroke="#cccccc" stroke-width="0.0120"/><circle r="0.4620" stroke="#cccccc" stroke-width="0.0120"/><circle r="0.4560" stroke="#cccccc" stroke-width="0.0120"/><circle r="0.4500" stroke="#cccccc" stroke-width="0.0120"/></g></g></g></g></g></g>
<g clip-path="url(#cpPlanetBig)"><g clip-path="url(#cpFront)"><g opacity=".95" filter="url(#sb1)"><g transform="translate(817.0 508.0) rotate(12.6) scale(361.0 186.0)" fill="none"><circle r="0.9240" stroke="#c3c3c3" stroke-width="0.0120"/><circle r="0.9180" stroke="#c4c4c4" stroke-width="0.0120"/><circle r="0.9120" stroke="#c5c5c5" stroke-width="0.0120"/><circle r="0.9060" stroke="#c6c6c6" stroke-width="0.0120"/><circle r="0.9000" stroke="#c7c7c7" stroke-width="0.0120"/><circle r="0.8940" stroke="#c8c8c8" stroke-width="0.0120"/><circle r="0.8880" stroke="#c7c7c7" stroke-width="0.0120"/><circle r="0.8820" stroke="#c7c7c7" stroke-width="0.0120"/><circle r="0.8760" stroke="#c6c6c6" stroke-width="0.0120"/><circle r="0.8700" stroke="#e4e4e4" stroke-width="0.0120"/><circle r="0.8640" stroke="#eaeaea" stroke-width="0.0120"/><circle r="0.8580" stroke="#eaeaea" stroke-width="0.0120"/><circle r="0.8520" stroke="#e3e3e3" stroke-width="0.0120"/><circle r="0.8460" stroke="#dddddd" stroke-width="0.0120"/><circle r="0.8400" stroke="#dedede" stroke-width="0.0120"/><circle r="0.8340" stroke="#dfdfdf" stroke-width="0.0120"/><circle r="0.8280" stroke="#e0e0e0" stroke-width="0.0120"/><circle r="0.8220" stroke="#e1e1e1" stroke-width="0.0120"/><circle r="0.8160" stroke="#e2e2e2" stroke-width="0.0120"/><circle r="0.8100" stroke="#e0e0e0" stroke-width="0.0120"/><circle r="0.8040" stroke="#dedede" stroke-width="0.0120"/><circle r="0.7980" stroke="#dcdcdc" stroke-width="0.0120"/><circle r="0.7920" stroke="#dadada" stroke-width="0.0120"/><circle r="0.7860" stroke="#d9d9d9" stroke-width="0.0120"/><circle r="0.7800" stroke="#d7d7d7" stroke-width="0.0120"/><circle r="0.7740" stroke="#d7d7d7" stroke-width="0.0120"/><circle r="0.7680" stroke="#d8d8d8" stroke-width="0.0120"/><circle r="0.7620" stroke="#d9d9d9" stroke-width="0.0120"/><circle r="0.7560" stroke="#dadada" stroke-width="0.0120"/><circle r="0.7500" stroke="#dbdbdb" stroke-width="0.0120"/><circle r="0.7440" stroke="#dddddd" stroke-width="0.0120"/><circle r="0.7380" stroke="#dedede" stroke-width="0.0120"/><circle r="0.7320" stroke="#dddddd" stroke-width="0.0120"/><circle r="0.7260" stroke="#dcdcdc" stroke-width="0.0120"/><circle r="0.7200" stroke="#dbdbdb" stroke-width="0.0120"/><circle r="0.7140" stroke="#d9d9d9" stroke-width="0.0120"/><circle r="0.7080" stroke="#d8d8d8" stroke-width="0.0120"/><circle r="0.7020" stroke="#d7d7d7" stroke-width="0.0120"/><circle r="0.6960" stroke="#d6d6d6" stroke-width="0.0120"/><circle r="0.6900" stroke="#d4d4d4" stroke-width="0.0120"/></g><g mask="url(#mFront)"><g transform="translate(817.0 508.0) rotate(12.6) scale(361.0 186.0)" fill="none"><circle r="0.9240" stroke="#9f9f9f" stroke-width="0.0120"/><circle r="0.9180" stroke="#9c9c9c" stroke-width="0.0120"/><circle r="0.9120" stroke="#999999" stroke-width="0.0120"/><circle r="0.9060" stroke="#969696" stroke-width="0.0120"/><circle r="0.9000" stroke="#939393" stroke-width="0.0120"/><circle r="0.8940" stroke="#8f8f8f" stroke-width="0.0120"/><circle r="0.8880" stroke="#8a8a8a" stroke-width="0.0120"/><circle r="0.8820" stroke="#858585" stroke-width="0.0120"/><circle r="0.8760" stroke="#767676" stroke-width="0.0120"/><circle r="0.8700" stroke="#545454" stroke-width="0.0120"/><circle r="0.8640" stroke="#525252" stroke-width="0.0120"/><circle r="0.8580" stroke="#505050" stroke-width="0.0120"/><circle r="0.8520" stroke="#808080" stroke-width="0.0120"/><circle r="0.8460" stroke="#c5c5c5" stroke-width="0.0120"/><circle r="0.8400" stroke="#cfcfcf" stroke-width="0.0120"/><circle r="0.8340" stroke="#cecece" stroke-width="0.0120"/><circle r="0.8280" stroke="#cccccc" stroke-width="0.0120"/><circle r="0.8220" stroke="#cdcdcd" stroke-width="0.0120"/><circle r="0.8160" stroke="#cfcfcf" stroke-width="0.0120"/><circle r="0.8100" stroke="#d1d1d1" stroke-width="0.0120"/><circle r="0.8040" stroke="#d2d2d2" stroke-width="0.0120"/><circle r="0.7980" stroke="#d4d4d4" stroke-width="0.0120"/><circle r="0.7920" stroke="#d0d0d0" stroke-width="0.0120"/><circle r="0.7860" stroke="#cbcbcb" stroke-width="0.0120"/><circle r="0.7800" stroke="#c6c6c6" stroke-width="0.0120"/><circle r="0.7740" stroke="#c5c5c5" stroke-width="0.0120"/><circle r="0.7680" stroke="#c7c7c7" stroke-width="0.0120"/><circle r="0.7620" stroke="#c9c9c9" stroke-width="0.0120"/><circle r="0.7560" stroke="#cbcbcb" stroke-width="0.0120"/><circle r="0.7500" stroke="#cdcdcd" stroke-width="0.0120"/><circle r="0.7440" stroke="#cccccc" stroke-width="0.0120"/><circle r="0.7380" stroke="#c9c9c9" stroke-width="0.0120"/><circle r="0.7320" stroke="#c6c6c6" stroke-width="0.0120"/><circle r="0.7260" stroke="#c3c3c3" stroke-width="0.0120"/><circle r="0.7200" stroke="#c0c0c0" stroke-width="0.0120"/><circle r="0.7140" stroke="#bfbfbf" stroke-width="0.0120"/><circle r="0.7080" stroke="#c0c0c0" stroke-width="0.0120"/><circle r="0.7020" stroke="#c2c2c2" stroke-width="0.0120"/><circle r="0.6960" stroke="#c4c4c4" stroke-width="0.0120"/><circle r="0.6900" stroke="#c5c5c5" stroke-width="0.0120"/></g></g><g clip-path="url(#cpStrip)"><g transform="translate(817.0 508.0) rotate(12.6) scale(361.0 186.0)" fill="none"><circle r="0.9240" stroke="#4f4f4f" stroke-width="0.0120"/><circle r="0.9180" stroke="#4f4f4f" stroke-width="0.0120"/><circle r="0.9120" stroke="#4f4f4f" stroke-width="0.0120"/><circle r="0.9060" stroke="#4f4f4f" stroke-width="0.0120"/><circle r="0.9000" stroke="#4f4f4f" stroke-width="0.0120"/><circle r="0.8940" stroke="#505050" stroke-width="0.0120"/><circle r="0.8880" stroke="#505050" stroke-width="0.0120"/><circle r="0.8820" stroke="#737373" stroke-width="0.0120"/><circle r="0.8760" stroke="#bbbbbb" stroke-width="0.0120"/><circle r="0.8700" stroke="#949494" stroke-width="0.0120"/><circle r="0.8640" stroke="#8c8c8c" stroke-width="0.0120"/><circle r="0.8580" stroke="#686868" stroke-width="0.0120"/><circle r="0.8520" stroke="#525252" stroke-width="0.0120"/><circle r="0.8460" stroke="#525252" stroke-width="0.0120"/><circle r="0.8400" stroke="#535353" stroke-width="0.0120"/><circle r="0.8340" stroke="#535353" stroke-width="0.0120"/><circle r="0.8280" stroke="#535353" stroke-width="0.0120"/><circle r="0.8220" stroke="#535353" stroke-width="0.0120"/><circle r="0.8160" stroke="#535353" stroke-width="0.0120"/><circle r="0.8100" stroke="#545454" stroke-width="0.0120"/><circle r="0.8040" stroke="#545454" stroke-width="0.0120"/><circle r="0.7980" stroke="#545454" stroke-width="0.0120"/><circle r="0.7920" stroke="#545454" stroke-width="0.0120"/><circle r="0.7860" stroke="#555555" stroke-width="0.0120"/><circle r="0.7800" stroke="#555555" stroke-width="0.0120"/><circle r="0.7740" stroke="#565656" stroke-width="0.0120"/><circle r="0.7680" stroke="#565656" stroke-width="0.0120"/><circle r="0.7620" stroke="#565656" stroke-width="0.0120"/><circle r="0.7560" stroke="#575757" stroke-width="0.0120"/><circle r="0.7500" stroke="#575757" stroke-width="0.0120"/><circle r="0.7440" stroke="#585858" stroke-width="0.0120"/><circle r="0.7380" stroke="#585858" stroke-width="0.0120"/><circle r="0.7320" stroke="#585858" stroke-width="0.0120"/><circle r="0.7260" stroke="#585858" stroke-width="0.0120"/><circle r="0.7200" stroke="#595959" stroke-width="0.0120"/><circle r="0.7140" stroke="#595959" stroke-width="0.0120"/><circle r="0.7080" stroke="#595959" stroke-width="0.0120"/><circle r="0.7020" stroke="#595959" stroke-width="0.0120"/><circle r="0.6960" stroke="#595959" stroke-width="0.0120"/><circle r="0.6900" stroke="#5a5a5a" stroke-width="0.0120"/></g></g></g></g></g>
<g stroke="#3a1866" stroke-width="1.8" fill="none" stroke-linecap="round"><path d="M463 344.5L648 460"/><path d="M503.7 362.3Q518 352 535 344.5" stroke-width="1.7"/><path d="M540.3 385Q551 377 564 370.6" stroke-width="1.7"/><path d="M606.4 425.3Q612 417 623 412.7" stroke-width="1.5"/><path d="M474 567L506 546.5M499 546L507 545.5L504.5 552.5" stroke-width="1.1"/><path d="M560 622.5C572 614 585 604 595.5 593M588 594L596 592L596 600.5" stroke-width="1.1"/></g>
<text x="481.5" y="335" font-family="DejaVu Sans, Liberation Sans, sans-serif" font-size="12.5" fill="#3a1866" transform="rotate(-6 481.5 335)">G</text>
<text x="502.5" y="349.5" font-family="DejaVu Sans, Liberation Sans, sans-serif" font-size="12.5" fill="#3a1866" transform="rotate(8 502.5 349.5)">F</text>
<text x="532.5" y="374.5" font-family="DejaVu Sans, Liberation Sans, sans-serif" font-size="13" fill="#3a1866" transform="rotate(8 532.5 374.5)">A</text>
<text x="577" y="400" font-family="DejaVu Sans, Liberation Sans, sans-serif" font-size="13" fill="#3a1866" transform="rotate(10 577 400)">B</text>
<text x="615.5" y="430" font-family="DejaVu Sans, Liberation Sans, sans-serif" font-size="11.5" fill="#3a1866" transform="rotate(12 615.5 430)">C</text>
<text x="634" y="446" font-family="DejaVu Sans, Liberation Sans, sans-serif" font-size="12" fill="#3a1866" transform="rotate(-18 634 446)">D</text>
<text x="404.5" y="573.5" font-family="Liberation Sans, sans-serif" font-style="italic" font-size="13" fill="#3a1866" transform="rotate(0 404.5 573.5)" textLength="69" lengthAdjust="spacingAndGlyphs">Enke division</text>
<text x="476.5" y="637.5" font-family="Liberation Sans, sans-serif" font-style="italic" font-size="13" fill="#3a1866" transform="rotate(0 476.5 637.5)" textLength="84" lengthAdjust="spacingAndGlyphs">Cassini division</text>
</svg>
<svg class="i" style="left:196px;top:652px" width="56" height="38" viewBox="0 0 56 38" ><path d="M1 1.200L54 37.500H1z" fill="#7030a0"/></svg>
<div class="b" id="co"></div>
<span class="t" style="left:99.7px;top:698.0px;font-size:14.20px;font-weight:400;color:#fff;letter-spacing:0.359px;">Click and drag to resize</span>
<span class="t" style="left:144.0px;top:717.0px;font-size:14.20px;font-weight:400;color:#fff;letter-spacing:0.514px;">the panes</span>
</div></body></html>
